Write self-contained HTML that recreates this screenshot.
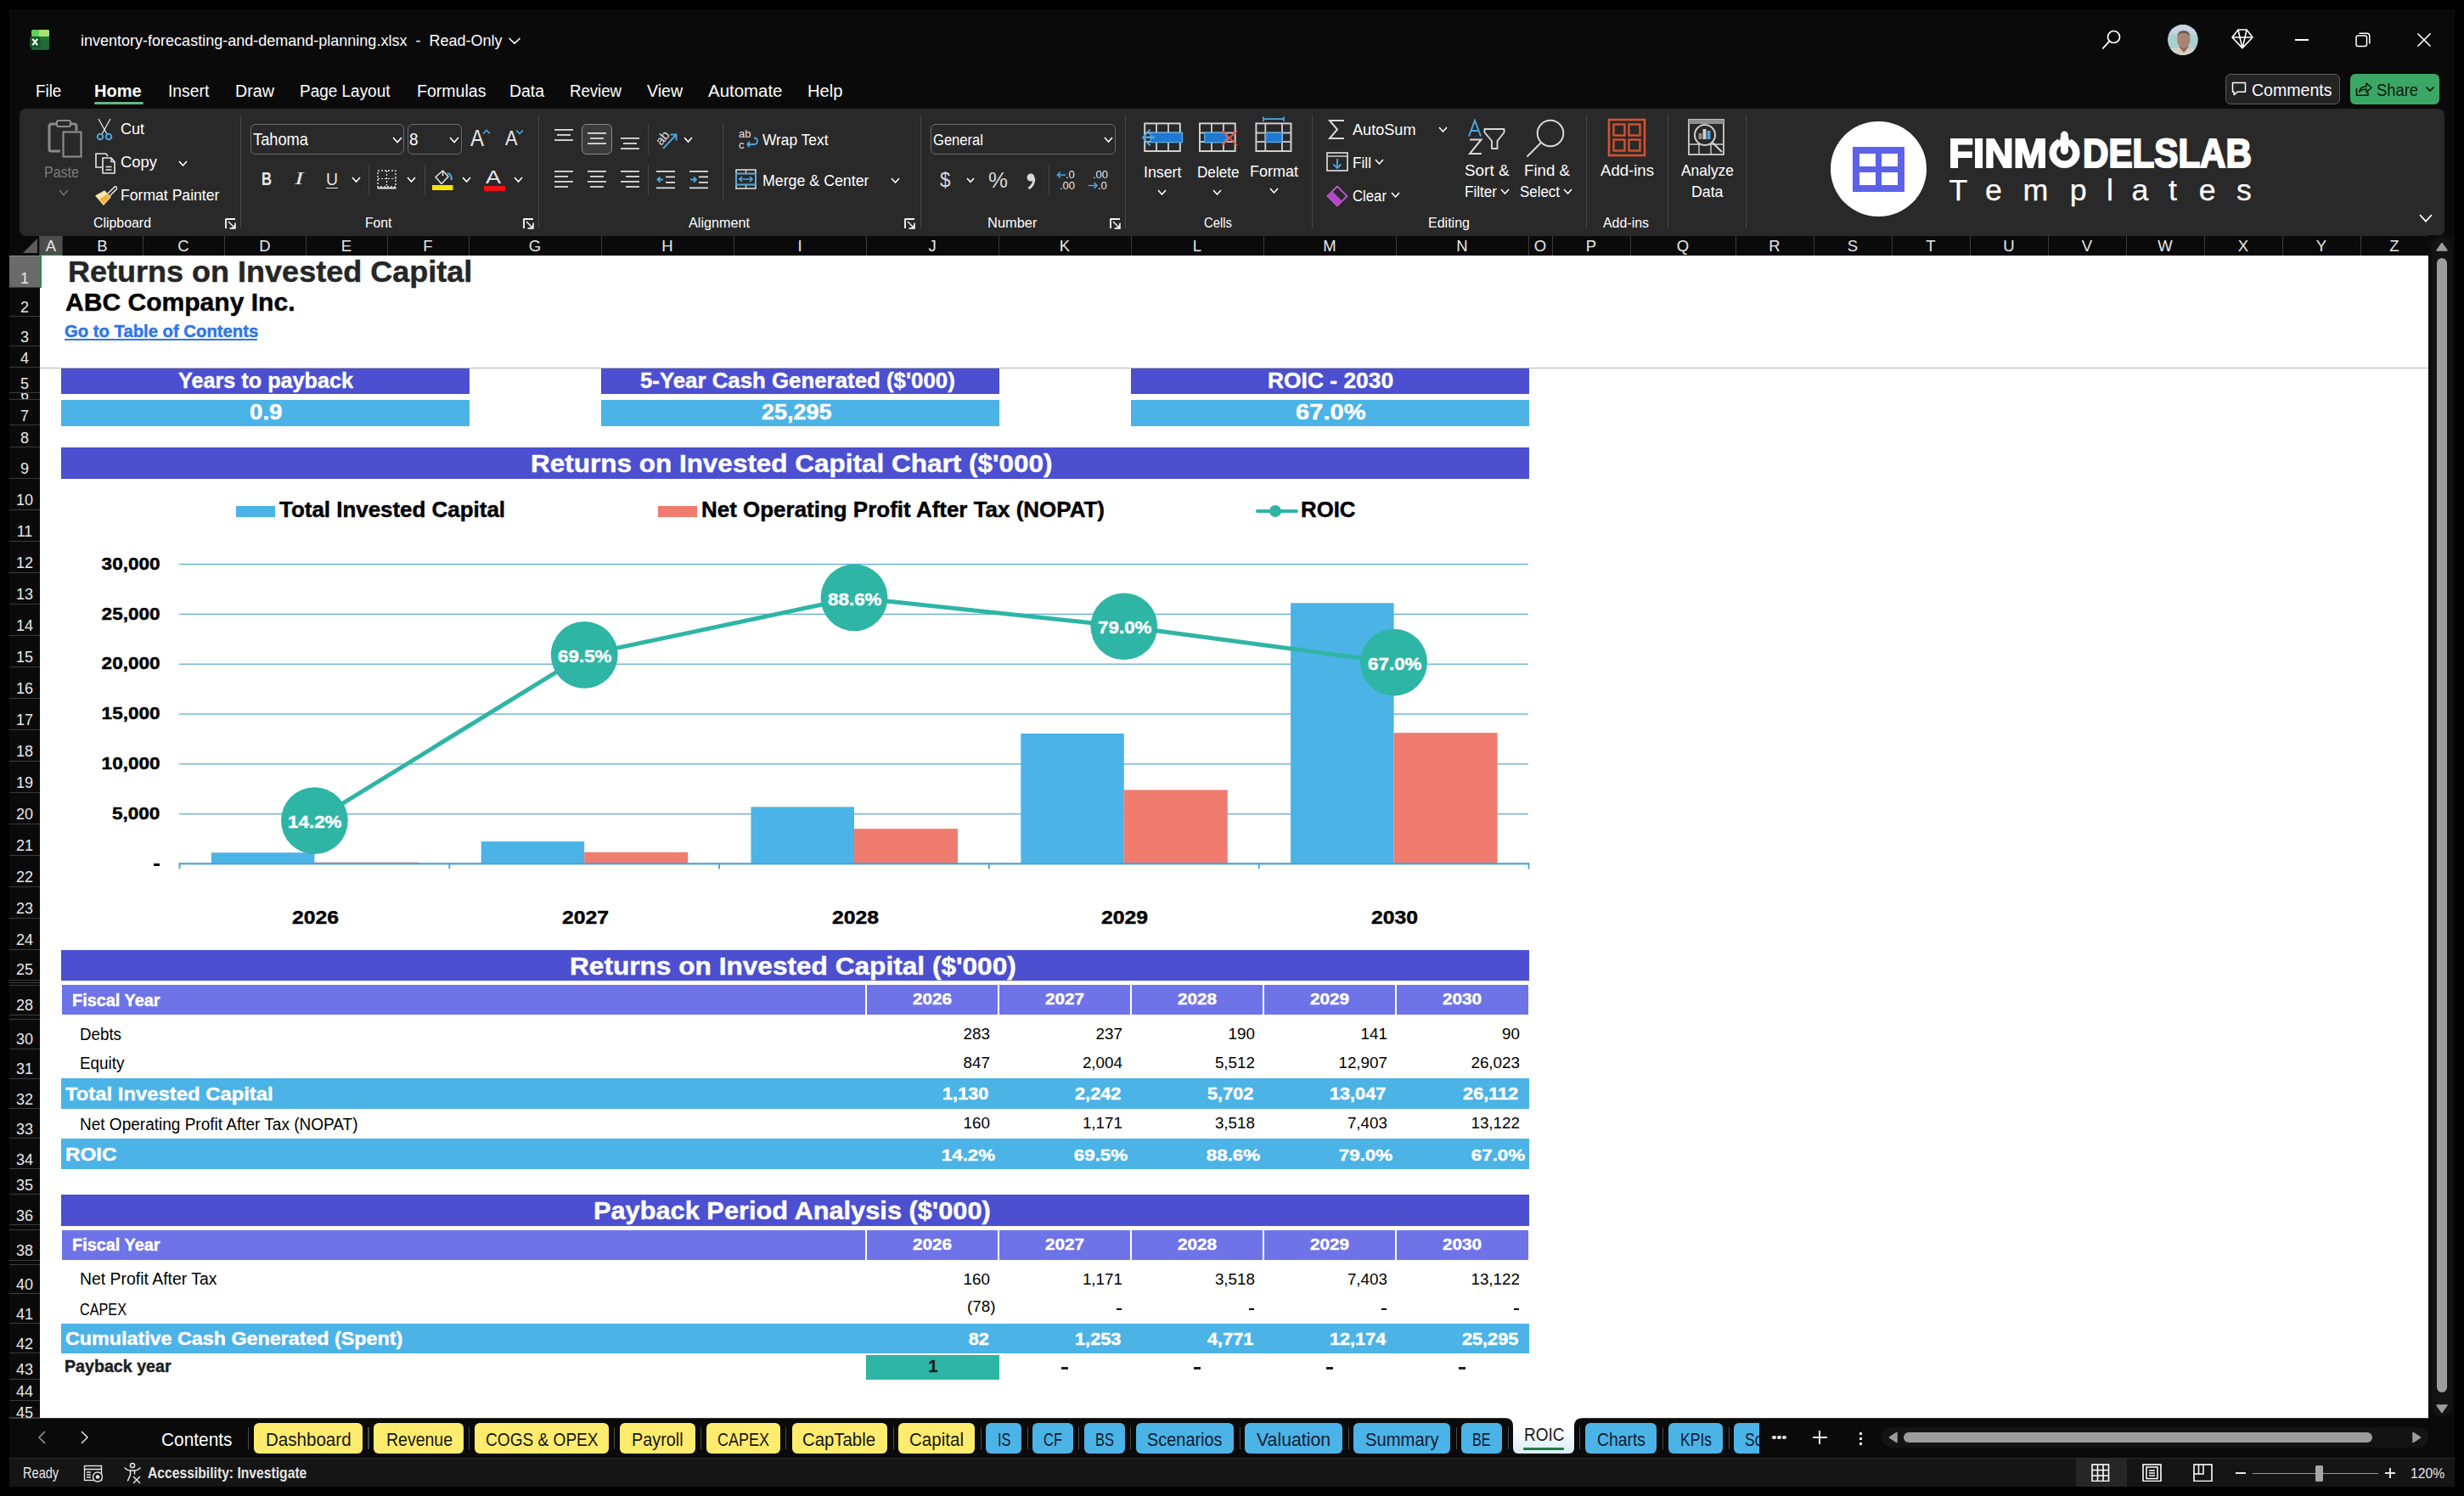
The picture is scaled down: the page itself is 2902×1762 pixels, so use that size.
<!DOCTYPE html>
<html><head><meta charset="utf-8"><style>
html,body{margin:0;padding:0;}
body{width:2902px;height:1762px;background:#000;position:relative;overflow:hidden;font-family:'Liberation Sans',sans-serif;}
body>div{position:absolute;}

</style></head><body>
<div style="left:11px;top:11px;width:2880px;height:1740px;background:#0a0a0a;"></div>
<svg style="position:absolute;left:35px;top:35px;" width="24" height="24" viewBox="0 0 24 24">
<rect x="2" y="0" width="21" height="23.5" rx="2" fill="#21773a"/>
<rect x="2" y="0" width="21" height="8" rx="2" fill="#5fcf5b"/>
<rect x="11" y="0" width="12" height="8" rx="1.5" fill="#a8e46f"/>
<rect x="2" y="12" width="21" height="11.5" rx="1.5" fill="#1e6b36"/>
<rect x="0" y="8" width="12.5" height="13" rx="2" fill="#16582b"/>
<path d="M3.3 10.8 L9.2 18.2 M9.2 10.8 L3.3 18.2" stroke="#fff" stroke-width="2.1"/>
</svg>
<div style="left:95.00px;top:38.22px;font-family:'Liberation Sans', sans-serif;font-size:19.28px;line-height:1;font-weight:400;color:#ffffff;white-space:pre;transform:scaleX(0.9348);transform-origin:0 0;">inventory-forecasting-and-demand-planning.xlsx  -  Read-Only</div>
<svg style="position:absolute;left:597px;top:42px;" width="18" height="12" viewBox="0 0 18 12"><path d="M2.5 3 L9 9.2 L15.5 3" fill="none" stroke="#fff" stroke-width="1.6"/></svg>
<div style="left:42.20px;top:97.57px;font-family:'Liberation Sans', sans-serif;font-size:19.57px;line-height:1;font-weight:400;color:#ffffff;white-space:pre;transform:scaleX(0.9619);transform-origin:0 0;">File</div>
<div style="left:111.00px;top:97.57px;font-family:'Liberation Sans', sans-serif;font-size:19.57px;line-height:1;font-weight:700;color:#ffffff;white-space:pre;transform:scaleX(1.0237);transform-origin:0 0;">Home</div>
<div style="left:197.80px;top:97.57px;font-family:'Liberation Sans', sans-serif;font-size:19.57px;line-height:1;font-weight:400;color:#ffffff;white-space:pre;transform:scaleX(0.9859);transform-origin:0 0;">Insert</div>
<div style="left:277.00px;top:97.57px;font-family:'Liberation Sans', sans-serif;font-size:19.57px;line-height:1;font-weight:400;color:#ffffff;white-space:pre;transform:scaleX(1.0082);transform-origin:0 0;">Draw</div>
<div style="left:352.60px;top:97.57px;font-family:'Liberation Sans', sans-serif;font-size:19.57px;line-height:1;font-weight:400;color:#ffffff;white-space:pre;transform:scaleX(0.9692);transform-origin:0 0;">Page Layout</div>
<div style="left:490.60px;top:97.57px;font-family:'Liberation Sans', sans-serif;font-size:19.57px;line-height:1;font-weight:400;color:#ffffff;white-space:pre;transform:scaleX(0.9992);transform-origin:0 0;">Formulas</div>
<div style="left:599.50px;top:97.57px;font-family:'Liberation Sans', sans-serif;font-size:19.57px;line-height:1;font-weight:400;color:#ffffff;white-space:pre;transform:scaleX(0.9928);transform-origin:0 0;">Data</div>
<div style="left:670.50px;top:97.57px;font-family:'Liberation Sans', sans-serif;font-size:19.57px;line-height:1;font-weight:400;color:#ffffff;white-space:pre;transform:scaleX(0.9517);transform-origin:0 0;">Review</div>
<div style="left:761.50px;top:97.57px;font-family:'Liberation Sans', sans-serif;font-size:19.57px;line-height:1;font-weight:400;color:#ffffff;white-space:pre;transform:scaleX(0.9996);transform-origin:0 0;">View</div>
<div style="left:833.60px;top:97.57px;font-family:'Liberation Sans', sans-serif;font-size:19.57px;line-height:1;font-weight:400;color:#ffffff;white-space:pre;transform:scaleX(1.0446);transform-origin:0 0;">Automate</div>
<div style="left:950.60px;top:97.57px;font-family:'Liberation Sans', sans-serif;font-size:19.57px;line-height:1;font-weight:400;color:#ffffff;white-space:pre;transform:scaleX(1.0298);transform-origin:0 0;">Help</div>
<div style="left:111px;top:120px;width:58px;height:3px;background:#62b882;border-radius:1.5px;"></div>
<svg style="position:absolute;left:2474px;top:34px;" width="26" height="26" viewBox="0 0 26 26"><circle cx="15.5" cy="9.5" r="7" fill="none" stroke="#fff" stroke-width="1.7"/><path d="M10.4 14.6 L2.8 22.8" stroke="#fff" stroke-width="1.9" stroke-linecap="round"/></svg>
<svg style="position:absolute;left:2553px;top:28.8px" width="36" height="36" viewBox="0 0 36 36">
<defs><clipPath id="av"><circle cx="17.9" cy="18" r="17.9"/></clipPath></defs>
<g clip-path="url(#av)"><rect width="36" height="36" fill="#aacfcf"/><rect width="36" height="11.5" fill="#c9d3e4"/>
<rect y="28" width="36" height="8" fill="#c9d9d6"/>
<path d="M3 36 Q6 28.5 13.5 26.5 L19 33 L24.5 26.5 Q31 28.5 34 36 Z" fill="#d8cfc2"/>
<path d="M13.5 26.5 L19 33 L24.5 26.5 L23 23 L15 23 Z" fill="#8e6b5c"/>
<ellipse cx="18.8" cy="17.5" rx="7.8" ry="10" fill="#a98474"/>
<path d="M11 14 Q12 7 18.8 7 Q26 7 26.6 14 Q24 10 18.8 10 Q13 10 11 14 Z" fill="#6f5b52"/>
</g></svg>
<svg style="position:absolute;left:2626px;top:32px;" width="30" height="28" viewBox="0 0 30 28"><path d="M10 3 L20 3 L27 12 L15 24.6 L3 12 Z M3 12 L27 12 M10 3 L12 12 L15 24.6 L18 12 L20 3" fill="none" stroke="#fff" stroke-width="1.6" stroke-linejoin="round"/></svg>
<div style="left:2703px;top:46px;width:16px;height:1.6px;background:#ffffff;"></div>
<svg style="position:absolute;left:2773px;top:37px;" width="20" height="20" viewBox="0 0 20 20"><rect x="2" y="5" width="12.5" height="12.5" rx="2.2" fill="none" stroke="#fff" stroke-width="1.5"/><path d="M5.5 2.2 L14.5 2.2 Q17.8 2.2 17.8 5.5 L17.8 14.5" fill="none" stroke="#fff" stroke-width="1.5"/></svg>
<svg style="position:absolute;left:2845px;top:37px;" width="20" height="20" viewBox="0 0 20 20"><path d="M2.5 2.5 L17.5 17.5 M17.5 2.5 L2.5 17.5" stroke="#fff" stroke-width="1.6"/></svg>
<div style="left:2621px;top:87px;width:132.6px;height:33.6px;border:1.2px solid #5c5c5c;border-radius:6px;background:#242424;"></div>
<svg style="position:absolute;left:2627px;top:95px;" width="20" height="20" viewBox="0 0 20 20"><path d="M2.5 2.5 L17.5 2.5 L17.5 13.2 L8 13.2 L4.2 16.8 L4.2 13.2 L2.5 13.2 Z" fill="none" stroke="#fff" stroke-width="1.5" stroke-linejoin="round"/></svg>
<div style="left:2652.00px;top:95.90px;font-family:'Liberation Sans', sans-serif;font-size:20.00px;line-height:1;font-weight:400;color:#fff;white-space:pre;transform:scaleX(0.9772);transform-origin:0 0;">Comments</div>
<div style="left:2767.7px;top:87px;width:105.3px;height:36px;background:#3ba764;border-radius:6px;"></div>
<svg style="position:absolute;left:2773px;top:95px;" width="22" height="20" viewBox="0 0 22 20"><path d="M2.5 9 L2.5 17.2 L15.8 17.2 L15.8 13.5" fill="none" stroke="#0b1a10" stroke-width="1.6"/><path d="M5.5 13.5 Q6.5 7 14 7 L14 3 L20 8.3 L14 13.5 L14 10 Q9 10 5.5 13.5 Z" fill="none" stroke="#0b1a10" stroke-width="1.5" stroke-linejoin="round"/></svg>
<div style="left:2799.20px;top:95.90px;font-family:'Liberation Sans', sans-serif;font-size:20.00px;line-height:1;font-weight:400;color:#0b1a10;white-space:pre;transform:scaleX(0.9180);transform-origin:0 0;">Share</div>
<svg style="position:absolute;left:2855px;top:100px;" width="14" height="10" viewBox="0 0 14 10"><path d="M2.5 2.5 L7 7 L11.5 2.5" fill="none" stroke="#0b1a10" stroke-width="1.6"/></svg>
<div style="left:23px;top:128px;width:2856px;height:150px;background:#292929;border-radius:8px;"></div>
<div style="left:283px;top:135px;width:1px;height:134px;background:#474747;"></div>
<div style="left:634px;top:135px;width:1px;height:134px;background:#474747;"></div>
<div style="left:1083.5px;top:135px;width:1px;height:134px;background:#474747;"></div>
<div style="left:1325px;top:135px;width:1px;height:134px;background:#474747;"></div>
<div style="left:1544.6px;top:135px;width:1px;height:134px;background:#474747;"></div>
<div style="left:1868px;top:135px;width:1px;height:134px;background:#474747;"></div>
<div style="left:1963.7px;top:135px;width:1px;height:134px;background:#474747;"></div>
<div style="left:2056px;top:135px;width:1px;height:134px;background:#474747;"></div>
<svg style="position:absolute;left:53px;top:140px;" width="46" height="48" viewBox="0 0 46 48">
<path d="M13 6 L8 6 Q5 6 5 9 L5 36 Q5 38 7 38 L18 38" fill="none" stroke="#8a8a8a" stroke-width="3"/>
<path d="M31 6 L35 6 Q37 6 37 9 L37 14" fill="none" stroke="#8a8a8a" stroke-width="3"/>
<rect x="14" y="2" width="16" height="7" rx="2" fill="none" stroke="#8a8a8a" stroke-width="2.2"/>
<rect x="21.5" y="15.5" width="21" height="29" fill="none" stroke="#8a8a8a" stroke-width="2.2"/>
</svg>
<div style="left:51.50px;top:194.72px;font-family:'Liberation Sans', sans-serif;font-size:17.97px;line-height:1;font-weight:400;color:#7b7b7b;white-space:pre;transform:scaleX(0.8922);transform-origin:0 0;">Paste</div>
<svg style="position:absolute;left:67.5px;top:222.25px;" width="14" height="9.5" viewBox="0 0 14 9.5"><path d="M2 2 L7.0 7.5 L12 2" fill="none" stroke="#6f6f6f" stroke-width="1.6"/></svg>
<svg style="position:absolute;left:110px;top:139px;" width="26" height="27" viewBox="0 0 26 27">
<path d="M6 1 L16 19 M20 1 L10 19" stroke="#e6e6e6" stroke-width="1.3"/>
<circle cx="8" cy="22" r="3.3" fill="none" stroke="#4ca6e0" stroke-width="2"/>
<circle cx="18" cy="22" r="3.3" fill="none" stroke="#4ca6e0" stroke-width="2"/>
</svg>
<div style="left:141.50px;top:144.05px;font-family:'Liberation Sans', sans-serif;font-size:17.83px;line-height:1;font-weight:400;color:#ffffff;white-space:pre;transform:scaleX(1.0096);transform-origin:0 0;">Cut</div>
<svg style="position:absolute;left:110px;top:178px;" width="28" height="28" viewBox="0 0 28 28">
<path d="M15 3 L3 3 L3 19 L10 19" fill="none" stroke="#e6e6e6" stroke-width="1.6"/>
<path d="M15 3 L17 6" stroke="#e6e6e6" stroke-width="1.6"/>
<path d="M11 8 L21 8 L25 12.5 L25 26 L11 26 Z" fill="none" stroke="#e6e6e6" stroke-width="1.6" stroke-linejoin="round"/>
<path d="M21 8 L21 12.5 L25 12.5 M14.5 18.5 L21.5 18.5 M14.5 22 L21.5 22" fill="none" stroke="#e6e6e6" stroke-width="1.4"/>
</svg>
<div style="left:141.50px;top:183.05px;font-family:'Liberation Sans', sans-serif;font-size:17.83px;line-height:1;font-weight:400;color:#ffffff;white-space:pre;transform:scaleX(1.0338);transform-origin:0 0;">Copy</div>
<svg style="position:absolute;left:209.0px;top:187.525px;" width="13" height="8.95" viewBox="0 0 13 8.95"><path d="M2 2 L6.5 6.95 L11 2" fill="none" stroke="#fff" stroke-width="1.6"/></svg>
<svg style="position:absolute;left:110px;top:216px;" width="28" height="26" viewBox="0 0 28 26">
<path d="M17 12 L24.5 4.5 Q26 3 27.3 4.3 Q28.3 5.5 27 7 L19.5 14.5" fill="none" stroke="#e6e6e6" stroke-width="1.6"/>
<path d="M3 14.5 L13 9 L20 16 L12 25 Z" fill="#f2b233" stroke="#f5d08a" stroke-width="1.4" stroke-linejoin="round"/>
<path d="M3 14.5 L13 9 L16.5 12.5 L6.5 19 Z" fill="#f7e3b5"/>
</svg>
<div style="left:141.50px;top:221.43px;font-family:'Liberation Sans', sans-serif;font-size:18.55px;line-height:1;font-weight:400;color:#ffffff;white-space:pre;transform:scaleX(0.9498);transform-origin:0 0;">Format Painter</div>
<div style="left:109.50px;top:253.76px;font-family:'Liberation Sans', sans-serif;font-size:17.10px;line-height:1;font-weight:400;color:#ffffff;white-space:pre;transform:scaleX(0.9293);transform-origin:0 0;">Clipboard</div>
<svg style="position:absolute;left:265px;top:257px;" width="13" height="13" viewBox="0 0 13 13"><path d="M1 12 L1 1 L12 1" fill="none" stroke="#fff" stroke-width="1.3" transform="translate(0,0)"/><path d="M1 1 L12 1 M1 1 L1 12 M12 5.5 L12 12 L5.5 12 M4 4 L11.5 11.5 M11.5 7.5 L11.5 11.5 L7.5 11.5" fill="none" stroke="#fff" stroke-width="1.4"/></svg>
<div style="left:295px;top:146px;width:179px;height:34px;border:1px solid #6b6b6b;border-radius:6px;background:transparent;"></div>
<div style="left:297.50px;top:154.79px;font-family:'Liberation Sans', sans-serif;font-size:19.42px;line-height:1;font-weight:400;color:#ffffff;white-space:pre;transform:scaleX(0.9414);transform-origin:0 0;">Tahoma</div>
<svg style="position:absolute;left:460.5px;top:159.75px;" width="14" height="9.5" viewBox="0 0 14 9.5"><path d="M2 2 L7.0 7.5 L12 2" fill="none" stroke="#fff" stroke-width="1.6"/></svg>
<div style="left:479.5px;top:146px;width:62.5px;height:34px;border:1px solid #6b6b6b;border-radius:6px;background:transparent;"></div>
<div style="left:481.50px;top:154.79px;font-family:'Liberation Sans', sans-serif;font-size:19.42px;line-height:1;font-weight:400;color:#ffffff;white-space:pre;transform:scaleX(0.9725);transform-origin:0 0;">8</div>
<svg style="position:absolute;left:528.0px;top:159.75px;" width="14" height="9.5" viewBox="0 0 14 9.5"><path d="M2 2 L7.0 7.5 L12 2" fill="none" stroke="#fff" stroke-width="1.6"/></svg>
<div style="left:553.50px;top:148.59px;font-family:'Liberation Sans', sans-serif;font-size:27.54px;line-height:1;font-weight:400;color:#e8e8e8;white-space:pre;transform:scaleX(0.8715);transform-origin:0 0;">A</div>
<svg style="position:absolute;left:567px;top:151px;" width="12" height="9" viewBox="0 0 12 9"><path d="M2 6.5 L6 2.5 L10 6.5" fill="none" stroke="#4ca6e0" stroke-width="1.7"/></svg>
<div style="left:594.50px;top:152.29px;font-family:'Liberation Sans', sans-serif;font-size:23.19px;line-height:1;font-weight:400;color:#e8e8e8;white-space:pre;transform:scaleX(0.9374);transform-origin:0 0;">A</div>
<svg style="position:absolute;left:606px;top:151px;" width="12" height="9" viewBox="0 0 12 9"><path d="M2 2.5 L6 6.5 L10 2.5" fill="none" stroke="#4ca6e0" stroke-width="1.7"/></svg>
<div style="left:307.50px;top:200.02px;font-family:'Liberation Sans', sans-serif;font-size:21.74px;line-height:1;font-weight:700;color:#e6e6e6;white-space:pre;transform:scaleX(0.7649);transform-origin:0 0;">B</div>
<div style="left:346.50px;top:200.02px;font-family:'Liberation Serif', serif;font-size:21.74px;line-height:1;font-weight:400;color:#e6e6e6;white-space:pre;font-style:italic;transform:scaleX(1.4514);transform-origin:0 0;">I</div>
<div style="left:383.50px;top:200.75px;font-family:'Liberation Sans', sans-serif;font-size:20.29px;line-height:1;font-weight:400;color:#e6e6e6;white-space:pre;transform:scaleX(0.9562);transform-origin:0 0;">U</div>
<div style="left:383.5px;top:220.5px;width:14px;height:1.6px;background:#e6e6e6;"></div>
<svg style="position:absolute;left:413.0px;top:207.025px;" width="13" height="8.95" viewBox="0 0 13 8.95"><path d="M2 2 L6.5 6.95 L11 2" fill="none" stroke="#fff" stroke-width="1.6"/></svg>
<div style="left:434px;top:194px;width:1px;height:36px;background:#474747;"></div>
<svg style="position:absolute;left:443px;top:199px;" width="26" height="26" viewBox="0 0 26 26">
<rect x="2" y="2" width="21" height="19" fill="none" stroke="#e6e6e6" stroke-width="1.4" stroke-dasharray="2 2"/>
<path d="M12.5 2 L12.5 21 M2 11.5 L23 11.5" stroke="#e6e6e6" stroke-width="1.2" stroke-dasharray="2 2"/>
<rect x="1.5" y="21.5" width="22" height="2" fill="#e6e6e6"/>
</svg>
<svg style="position:absolute;left:477.5px;top:207.025px;" width="13" height="8.95" viewBox="0 0 13 8.95"><path d="M2 2 L6.5 6.95 L11 2" fill="none" stroke="#fff" stroke-width="1.6"/></svg>
<div style="left:500px;top:194px;width:1px;height:36px;background:#474747;"></div>
<svg style="position:absolute;left:508px;top:199px;" width="28" height="26" viewBox="0 0 28 26">
<path d="M5 9.5 L13.5 2 L20 9 L12 17.5 Z" fill="none" stroke="#e6e6e6" stroke-width="1.5" stroke-linejoin="round"/>
<path d="M13.5 2 L13.5 8" stroke="#e6e6e6" stroke-width="1.5"/>
<path d="M19 5 Q24.5 6 23.5 13" fill="none" stroke="#4ca6e0" stroke-width="2.2"/>
<rect x="1" y="19" width="24.5" height="6" fill="#f5e500"/>
</svg>
<svg style="position:absolute;left:542.5px;top:207.025px;" width="13" height="8.95" viewBox="0 0 13 8.95"><path d="M2 2 L6.5 6.95 L11 2" fill="none" stroke="#fff" stroke-width="1.6"/></svg>
<div style="left:572.00px;top:197.91px;font-family:'Liberation Sans', sans-serif;font-size:22.46px;line-height:1;font-weight:400;color:#e6e6e6;white-space:pre;transform:scaleX(1.2013);transform-origin:0 0;">A</div>
<div style="left:570px;top:218.5px;width:24.5px;height:6px;background:#ee1111;"></div>
<svg style="position:absolute;left:604.0px;top:207.025px;" width="13" height="8.95" viewBox="0 0 13 8.95"><path d="M2 2 L6.5 6.95 L11 2" fill="none" stroke="#fff" stroke-width="1.6"/></svg>
<div style="left:430.00px;top:253.76px;font-family:'Liberation Sans', sans-serif;font-size:17.10px;line-height:1;font-weight:400;color:#ffffff;white-space:pre;transform:scaleX(0.9205);transform-origin:0 0;">Font</div>
<svg style="position:absolute;left:616px;top:257px;" width="13" height="13" viewBox="0 0 13 13"><path d="M1 12 L1 1 L12 1" fill="none" stroke="#fff" stroke-width="1.3" transform="translate(0,0)"/><path d="M1 1 L12 1 M1 1 L1 12 M12 5.5 L12 12 L5.5 12 M4 4 L11.5 11.5 M11.5 7.5 L11.5 11.5 L7.5 11.5" fill="none" stroke="#fff" stroke-width="1.4"/></svg>
<svg style="position:absolute;left:653px;top:152px;" width="22" height="20.299999999999997" viewBox="0 0 22 20.299999999999997"><rect x="0.0" y="0.0" width="22" height="1.7" fill="#e6e6e6"/><rect x="3.0" y="6.1" width="16" height="1.7" fill="#e6e6e6"/><rect x="0.0" y="12.2" width="22" height="1.7" fill="#e6e6e6"/></svg>
<div style="left:685px;top:146px;width:34px;height:34px;border:1px solid #8a8a8a;border-radius:6px;background:#3b3b3b;"></div>
<svg style="position:absolute;left:692px;top:156px;" width="22" height="20.299999999999997" viewBox="0 0 22 20.299999999999997"><rect x="0.0" y="0.0" width="22" height="1.7" fill="#e6e6e6"/><rect x="3.0" y="6.1" width="16" height="1.7" fill="#e6e6e6"/><rect x="0.0" y="12.2" width="22" height="1.7" fill="#e6e6e6"/></svg>
<svg style="position:absolute;left:731px;top:162px;" width="22" height="20.299999999999997" viewBox="0 0 22 20.299999999999997"><rect x="0.0" y="0.0" width="22" height="1.7" fill="#e6e6e6"/><rect x="3.0" y="6.1" width="16" height="1.7" fill="#e6e6e6"/><rect x="0.0" y="12.2" width="22" height="1.7" fill="#e6e6e6"/></svg>
<div style="left:763px;top:146px;width:1px;height:36px;background:#474747;"></div>
<svg style="position:absolute;left:770px;top:148px;" width="30" height="30" viewBox="0 0 30 30">
<text x="1.5" y="19.5" font-family="Liberation Sans" font-size="15" fill="#e0e0e0" transform="rotate(-50 10 14)">ab</text>
<path d="M11 27 L26.5 10.5 M19.5 10.5 L26.5 10.5 L26.5 17.5" fill="none" stroke="#4ca6e0" stroke-width="1.9"/>
</svg>
<svg style="position:absolute;left:804.0px;top:160.025px;" width="13" height="8.95" viewBox="0 0 13 8.95"><path d="M2 2 L6.5 6.95 L11 2" fill="none" stroke="#fff" stroke-width="1.6"/></svg>
<svg style="position:absolute;left:653px;top:201.2px;" width="22" height="26.2" viewBox="0 0 22 26.2"><rect x="0" y="0.0" width="22" height="1.7" fill="#e6e6e6"/><rect x="0" y="6.05" width="16" height="1.7" fill="#e6e6e6"/><rect x="0" y="12.1" width="22" height="1.7" fill="#e6e6e6"/><rect x="0" y="18.15" width="16" height="1.7" fill="#e6e6e6"/></svg>
<svg style="position:absolute;left:692px;top:201.2px;" width="22" height="26.2" viewBox="0 0 22 26.2"><rect x="0.0" y="0.0" width="22" height="1.7" fill="#e6e6e6"/><rect x="3.0" y="6.05" width="16" height="1.7" fill="#e6e6e6"/><rect x="0.0" y="12.1" width="22" height="1.7" fill="#e6e6e6"/><rect x="3.0" y="18.15" width="16" height="1.7" fill="#e6e6e6"/></svg>
<svg style="position:absolute;left:731px;top:201.2px;" width="22" height="26.2" viewBox="0 0 22 26.2"><rect x="0" y="0.0" width="22" height="1.7" fill="#e6e6e6"/><rect x="6" y="6.05" width="16" height="1.7" fill="#e6e6e6"/><rect x="0" y="12.1" width="22" height="1.7" fill="#e6e6e6"/><rect x="6" y="18.15" width="16" height="1.7" fill="#e6e6e6"/></svg>
<div style="left:763px;top:194px;width:1px;height:36px;background:#474747;"></div>
<svg style="position:absolute;left:773px;top:200px;" width="24" height="24" viewBox="0 0 24 24"><rect x="0" y="1" width="22" height="1.7" fill="#e6e6e6"/><rect x="11" y="7.5" width="11" height="1.7" fill="#e6e6e6"/><rect x="11" y="14" width="11" height="1.7" fill="#e6e6e6"/><rect x="0" y="20.5" width="22" height="1.7" fill="#e6e6e6"/><path d="M8 11.5 L1.5 11.5 M4.5 8.5 L1.5 11.5 L4.5 14.5" fill="none" stroke="#4ca6e0" stroke-width="1.8"/></svg>
<svg style="position:absolute;left:812px;top:200px;" width="24" height="24" viewBox="0 0 24 24"><rect x="0" y="1" width="22" height="1.7" fill="#e6e6e6"/><rect x="11" y="7.5" width="11" height="1.7" fill="#e6e6e6"/><rect x="11" y="14" width="11" height="1.7" fill="#e6e6e6"/><rect x="0" y="20.5" width="22" height="1.7" fill="#e6e6e6"/><path d="M1 11.5 L8 11.5 M5 8.5 L8 11.5 L5 14.5" fill="none" stroke="#4ca6e0" stroke-width="1.8"/></svg>
<div style="left:851px;top:145px;width:1px;height:92px;background:#474747;"></div>
<svg style="position:absolute;left:867px;top:150px;" width="28" height="28" viewBox="0 0 28 28">
<text x="3" y="12" font-family="Liberation Sans" font-size="13" fill="#e6e6e6">ab</text>
<text x="3" y="25" font-family="Liberation Sans" font-size="13" fill="#e6e6e6">c</text>
<path d="M13 20 L21 20 Q25 20 25 16 Q25 12.5 21 12.5 M13 20 L16 17 M13 20 L16 23" fill="none" stroke="#4ca6e0" stroke-width="1.8"/>
</svg>
<div style="left:897.50px;top:155.68px;font-family:'Liberation Sans', sans-serif;font-size:18.26px;line-height:1;font-weight:400;color:#ffffff;white-space:pre;transform:scaleX(0.9511);transform-origin:0 0;">Wrap Text</div>
<svg style="position:absolute;left:865px;top:198px;" width="28" height="28" viewBox="0 0 28 28">
<rect x="2" y="2" width="23" height="22" fill="none" stroke="#e6e6e6" stroke-width="1.5"/>
<path d="M2 6.5 L25 6.5 M2 19.5 L25 19.5 M13.5 2 L13.5 6.5 M13.5 19.5 L13.5 24" stroke="#e6e6e6" stroke-width="1.3"/>
<rect x="2" y="6.5" width="23" height="13" fill="none" stroke="#4ca6e0" stroke-width="1.6"/>
<path d="M6 13 L21 13 M9 10 L6 13 L9 16 M18 10 L21 13 L18 16" fill="none" stroke="#4ca6e0" stroke-width="1.7"/>
</svg>
<div style="left:897.50px;top:203.78px;font-family:'Liberation Sans', sans-serif;font-size:18.26px;line-height:1;font-weight:400;color:#ffffff;white-space:pre;transform:scaleX(0.9742);transform-origin:0 0;">Merge &amp; Center</div>
<svg style="position:absolute;left:1048.0px;top:207.525px;" width="13" height="8.95" viewBox="0 0 13 8.95"><path d="M2 2 L6.5 6.95 L11 2" fill="none" stroke="#fff" stroke-width="1.6"/></svg>
<div style="left:810.50px;top:253.76px;font-family:'Liberation Sans', sans-serif;font-size:17.10px;line-height:1;font-weight:400;color:#ffffff;white-space:pre;transform:scaleX(0.9472);transform-origin:0 0;">Alignment</div>
<svg style="position:absolute;left:1065px;top:257px;" width="13" height="13" viewBox="0 0 13 13"><path d="M1 12 L1 1 L12 1" fill="none" stroke="#fff" stroke-width="1.3" transform="translate(0,0)"/><path d="M1 1 L12 1 M1 1 L1 12 M12 5.5 L12 12 L5.5 12 M4 4 L11.5 11.5 M11.5 7.5 L11.5 11.5 L7.5 11.5" fill="none" stroke="#fff" stroke-width="1.4"/></svg>
<div style="left:1096px;top:146px;width:215.5px;height:34px;border:1px solid #6b6b6b;border-radius:6px;background:transparent;"></div>
<div style="left:1099.00px;top:154.94px;font-family:'Liberation Sans', sans-serif;font-size:19.13px;line-height:1;font-weight:400;color:#ffffff;white-space:pre;transform:scaleX(0.8670);transform-origin:0 0;">General</div>
<svg style="position:absolute;left:1298.5px;top:160.025px;" width="13" height="8.95" viewBox="0 0 13 8.95"><path d="M2 2 L6.5 6.95 L11 2" fill="none" stroke="#fff" stroke-width="1.6"/></svg>
<div style="left:1107.00px;top:199.56px;font-family:'Liberation Sans', sans-serif;font-size:24.64px;line-height:1;font-weight:400;color:#d8d8d8;white-space:pre;transform:scaleX(0.9122);transform-origin:0 0;">$</div>
<svg style="position:absolute;left:1136.5px;top:207.8px;" width="12" height="8.4" viewBox="0 0 12 8.4"><path d="M2 2 L6.0 6.4 L10 2" fill="none" stroke="#fff" stroke-width="1.6"/></svg>
<div style="left:1163.50px;top:199.94px;font-family:'Liberation Sans', sans-serif;font-size:25.36px;line-height:1;font-weight:400;color:#d8d8d8;white-space:pre;transform:scaleX(1.0194);transform-origin:0 0;">%</div>
<svg style="position:absolute;left:1205px;top:200px;" width="18" height="26" viewBox="0 0 18 26"><circle cx="9" cy="9" r="4.5" fill="#d8d8d8"/><path d="M12.8 10 Q13 18 6.5 22" fill="none" stroke="#d8d8d8" stroke-width="3"/></svg>
<div style="left:1235px;top:194px;width:1px;height:36px;background:#474747;"></div>
<svg style="position:absolute;left:1243px;top:198px;" width="30" height="28" viewBox="0 0 30 28">
<text x="12" y="12" font-family="Liberation Sans" font-size="13" fill="#e6e6e6">.0</text>
<text x="5" y="25" font-family="Liberation Sans" font-size="13" fill="#e6e6e6">.00</text>
<path d="M12 8 L2.5 8 M6 4.5 L2.5 8 L6 11.5" fill="none" stroke="#4ca6e0" stroke-width="1.7"/>
</svg>
<svg style="position:absolute;left:1281px;top:198px;" width="30" height="28" viewBox="0 0 30 28">
<text x="6" y="12" font-family="Liberation Sans" font-size="13" fill="#e6e6e6">.00</text>
<text x="12" y="25" font-family="Liberation Sans" font-size="13" fill="#e6e6e6">.0</text>
<path d="M1 20.5 L11 20.5 M7.5 17 L11 20.5 L7.5 24" fill="none" stroke="#4ca6e0" stroke-width="1.7"/>
</svg>
<div style="left:1162.50px;top:253.76px;font-family:'Liberation Sans', sans-serif;font-size:17.10px;line-height:1;font-weight:400;color:#ffffff;white-space:pre;transform:scaleX(0.9622);transform-origin:0 0;">Number</div>
<svg style="position:absolute;left:1307px;top:257px;" width="13" height="13" viewBox="0 0 13 13"><path d="M1 12 L1 1 L12 1" fill="none" stroke="#fff" stroke-width="1.3" transform="translate(0,0)"/><path d="M1 1 L12 1 M1 1 L1 12 M12 5.5 L12 12 L5.5 12 M4 4 L11.5 11.5 M11.5 7.5 L11.5 11.5 L7.5 11.5" fill="none" stroke="#fff" stroke-width="1.4"/></svg>
<svg style="position:absolute;left:0;top:0" width="2902" height="300"><rect x="1348.2" y="145.4" width="41.59999999999991" height="32.599999999999994" fill="none" stroke="#d0d0d0" stroke-width="2"/><rect x="1361.1" y="145.4" width="1.8" height="32.599999999999994" fill="#d0d0d0"/><rect x="1375.1" y="145.4" width="1.8" height="32.599999999999994" fill="#d0d0d0"/><rect x="1348.2" y="155.6" width="41.59999999999991" height="1.8" fill="#d0d0d0"/><rect x="1348.2" y="166.1" width="41.59999999999991" height="1.8" fill="#d0d0d0"/><rect x="1355" y="156.3" width="37.5" height="11.3" fill="#1f78d1" stroke="#56a9e3" stroke-width="1.4"/><path d="M1360 162 L1347 162 M1354.5 152.5 L1346 162 L1354.5 171.5" fill="none" stroke="#4ca6e0" stroke-width="2"/><path d="M1348 161 L1360 161" stroke="#56a9e3" stroke-width="1"/><rect x="1413" y="145.4" width="41.700000000000045" height="32.599999999999994" fill="none" stroke="#d0d0d0" stroke-width="2"/><rect x="1426.1" y="145.4" width="1.8" height="32.599999999999994" fill="#d0d0d0"/><rect x="1440.1" y="145.4" width="1.8" height="32.599999999999994" fill="#d0d0d0"/><rect x="1413" y="155.6" width="41.700000000000045" height="1.8" fill="#d0d0d0"/><rect x="1413" y="166.1" width="41.700000000000045" height="1.8" fill="#d0d0d0"/><path d="M1418.8 156.3 L1441 156.3 L1446.5 162 L1441 167.7 L1418.8 167.7 Z" fill="#1f78d1" stroke="#56a9e3" stroke-width="1.4"/><path d="M1439.5 154 L1457 171 M1457 154 L1439.5 171" stroke="#e2524a" stroke-width="2"/><rect x="1479.4" y="145.4" width="41.09999999999991" height="32.599999999999994" fill="none" stroke="#d0d0d0" stroke-width="2"/><rect x="1489.3999999999999" y="145.4" width="1.8" height="32.599999999999994" fill="#d0d0d0"/><rect x="1509.1" y="145.4" width="1.8" height="32.599999999999994" fill="#d0d0d0"/><rect x="1479.4" y="155.6" width="41.09999999999991" height="1.8" fill="#d0d0d0"/><rect x="1479.4" y="166.1" width="41.09999999999991" height="1.8" fill="#d0d0d0"/><rect x="1490.8" y="156.3" width="19" height="11.2" fill="#1f78d1" stroke="#56a9e3" stroke-width="1.4"/><path d="M1488 140.2 L1512 140.2 M1488 137.5 L1488 143 M1512 137.5 L1512 143" stroke="#4ca6e0" stroke-width="1.8"/></svg>
<div style="left:1346.50px;top:194.08px;font-family:'Liberation Sans', sans-serif;font-size:18.26px;line-height:1;font-weight:400;color:#ffffff;white-space:pre;transform:scaleX(0.9747);transform-origin:0 0;">Insert</div>
<svg style="position:absolute;left:1362.0px;top:221.525px;" width="13" height="8.95" viewBox="0 0 13 8.95"><path d="M2 2 L6.5 6.95 L11 2" fill="none" stroke="#fff" stroke-width="1.6"/></svg>
<div style="left:1409.50px;top:194.08px;font-family:'Liberation Sans', sans-serif;font-size:18.26px;line-height:1;font-weight:400;color:#ffffff;white-space:pre;transform:scaleX(0.9381);transform-origin:0 0;">Delete</div>
<svg style="position:absolute;left:1427.0px;top:221.525px;" width="13" height="8.95" viewBox="0 0 13 8.95"><path d="M2 2 L6.5 6.95 L11 2" fill="none" stroke="#fff" stroke-width="1.6"/></svg>
<div style="left:1472.00px;top:193.48px;font-family:'Liberation Sans', sans-serif;font-size:18.26px;line-height:1;font-weight:400;color:#ffffff;white-space:pre;transform:scaleX(0.9859);transform-origin:0 0;">Format</div>
<svg style="position:absolute;left:1493.5px;top:219.525px;" width="13" height="8.95" viewBox="0 0 13 8.95"><path d="M2 2 L6.5 6.95 L11 2" fill="none" stroke="#fff" stroke-width="1.6"/></svg>
<div style="left:1417.50px;top:253.76px;font-family:'Liberation Sans', sans-serif;font-size:17.10px;line-height:1;font-weight:400;color:#ffffff;white-space:pre;transform:scaleX(0.8684);transform-origin:0 0;">Cells</div>
<svg style="position:absolute;left:1563px;top:140px;" width="24" height="26" viewBox="0 0 24 26"><path d="M20 2 L3 2 L12 12.5 L3 23 L20 23" fill="none" stroke="#d8d8d8" stroke-width="2"/></svg>
<div style="left:1592.50px;top:143.68px;font-family:'Liberation Sans', sans-serif;font-size:18.26px;line-height:1;font-weight:400;color:#ffffff;white-space:pre;transform:scaleX(0.9923);transform-origin:0 0;">AutoSum</div>
<svg style="position:absolute;left:1693.0px;top:147.525px;" width="13" height="8.95" viewBox="0 0 13 8.95"><path d="M2 2 L6.5 6.95 L11 2" fill="none" stroke="#fff" stroke-width="1.6"/></svg>
<svg style="position:absolute;left:1561px;top:178px;" width="28" height="26" viewBox="0 0 28 26"><rect x="2" y="2" width="24" height="21" fill="none" stroke="#cfcfcf" stroke-width="1.8"/><path d="M2 6 L26 6" stroke="#cfcfcf" stroke-width="1.5"/><path d="M14 9 L14 20 M9.5 15.5 L14 20 L18.5 15.5" fill="none" stroke="#4ca6e0" stroke-width="1.9"/></svg>
<div style="left:1592.50px;top:182.68px;font-family:'Liberation Sans', sans-serif;font-size:18.26px;line-height:1;font-weight:400;color:#ffffff;white-space:pre;transform:scaleX(0.9437);transform-origin:0 0;">Fill</div>
<svg style="position:absolute;left:1618.0px;top:185.525px;" width="13" height="8.95" viewBox="0 0 13 8.95"><path d="M2 2 L6.5 6.95 L11 2" fill="none" stroke="#fff" stroke-width="1.6"/></svg>
<svg style="position:absolute;left:1561px;top:217px;" width="28" height="28" viewBox="0 0 28 28"><path d="M2.5 14 L14 2.5 L25.5 14 L14 25.5 Z" fill="none" stroke="#c05bd3" stroke-width="1.8"/><path d="M2.5 14 L8.2 8.3 L19.7 19.8 L14 25.5 Z" fill="#b148c9"/></svg>
<div style="left:1592.50px;top:221.68px;font-family:'Liberation Sans', sans-serif;font-size:18.26px;line-height:1;font-weight:400;color:#ffffff;white-space:pre;transform:scaleX(0.9169);transform-origin:0 0;">Clear</div>
<svg style="position:absolute;left:1637.0px;top:224.525px;" width="13" height="8.95" viewBox="0 0 13 8.95"><path d="M2 2 L6.5 6.95 L11 2" fill="none" stroke="#fff" stroke-width="1.6"/></svg>
<svg style="position:absolute;left:0;top:0" width="2902" height="300"><path d="M1730 160.5 L1737 142 L1744 160.5 M1732.6 154 L1741.4 154" fill="none" stroke="#4ca6e0" stroke-width="2"/><path d="M1731 164.5 L1744.5 164.5 L1731 181 L1745 181" fill="none" stroke="#d8d8d8" stroke-width="2"/><path d="M1748.5 152 L1771.5 152 L1771.5 156 L1763.5 166 L1763.5 175 L1757 175 L1757 166 L1748.5 156 Z" fill="none" stroke="#d8d8d8" stroke-width="1.9" stroke-linejoin="round"/><circle cx="1826" cy="157" r="15.3" fill="none" stroke="#d8d8d8" stroke-width="2"/><path d="M1815 168 L1798.5 184.5" stroke="#d8d8d8" stroke-width="2"/></svg>
<div style="left:1724.50px;top:192.28px;font-family:'Liberation Sans', sans-serif;font-size:18.26px;line-height:1;font-weight:400;color:#ffffff;white-space:pre;transform:scaleX(1.0351);transform-origin:0 0;">Sort &amp;</div>
<div style="left:1724.50px;top:216.68px;font-family:'Liberation Sans', sans-serif;font-size:18.26px;line-height:1;font-weight:400;color:#ffffff;white-space:pre;transform:scaleX(0.9368);transform-origin:0 0;">Filter</div>
<svg style="position:absolute;left:1766.0px;top:220.525px;" width="13" height="8.95" viewBox="0 0 13 8.95"><path d="M2 2 L6.5 6.95 L11 2" fill="none" stroke="#fff" stroke-width="1.6"/></svg>
<div style="left:1794.50px;top:192.28px;font-family:'Liberation Sans', sans-serif;font-size:18.26px;line-height:1;font-weight:400;color:#ffffff;white-space:pre;transform:scaleX(1.0237);transform-origin:0 0;">Find &amp;</div>
<div style="left:1789.50px;top:216.68px;font-family:'Liberation Sans', sans-serif;font-size:18.26px;line-height:1;font-weight:400;color:#ffffff;white-space:pre;transform:scaleX(0.9264);transform-origin:0 0;">Select</div>
<svg style="position:absolute;left:1840.0px;top:220.525px;" width="13" height="8.95" viewBox="0 0 13 8.95"><path d="M2 2 L6.5 6.95 L11 2" fill="none" stroke="#fff" stroke-width="1.6"/></svg>
<div style="left:1681.50px;top:253.76px;font-family:'Liberation Sans', sans-serif;font-size:17.10px;line-height:1;font-weight:400;color:#ffffff;white-space:pre;transform:scaleX(0.9372);transform-origin:0 0;">Editing</div>
<svg style="position:absolute;left:1893px;top:139px;" width="46" height="46" viewBox="0 0 46 46"><rect x="2" y="2" width="42" height="42" fill="none" stroke="#d4522e" stroke-width="2.6"/><rect x="7.5" y="7.5" width="13" height="13" fill="none" stroke="#d4522e" stroke-width="2.4"/><rect x="25.5" y="7.5" width="13" height="13" fill="none" stroke="#d4522e" stroke-width="2.4"/><rect x="7.5" y="25.5" width="13" height="13" fill="none" stroke="#d4522e" stroke-width="2.4"/><rect x="25.5" y="25.5" width="13" height="13" fill="none" stroke="#d4522e" stroke-width="2.4"/></svg>
<div style="left:1884.50px;top:192.28px;font-family:'Liberation Sans', sans-serif;font-size:18.26px;line-height:1;font-weight:400;color:#ffffff;white-space:pre;transform:scaleX(1.0179);transform-origin:0 0;">Add-ins</div>
<div style="left:1887.50px;top:253.76px;font-family:'Liberation Sans', sans-serif;font-size:17.10px;line-height:1;font-weight:400;color:#ffffff;white-space:pre;transform:scaleX(0.9315);transform-origin:0 0;">Add-ins</div>
<svg style="position:absolute;left:1987px;top:139px;" width="46" height="46" viewBox="0 0 46 46">
<rect x="2" y="2" width="41" height="41" fill="none" stroke="#cfcfcf" stroke-width="1.8"/>
<rect x="2" y="2" width="41" height="5" fill="#8f8f8f"/>
<path d="M2 31 L43 31 M14 31 L14 43 M28 31 L28 43" stroke="#cfcfcf" stroke-width="1.4"/>
<circle cx="21" cy="20" r="12" fill="#292929" stroke="#cfcfcf" stroke-width="2"/>
<rect x="13.5" y="18" width="4" height="7" fill="#8f8f8f"/><rect x="18.5" y="13" width="4" height="12" fill="#cfcfcf"/><rect x="23.5" y="15" width="4" height="10" fill="#4ca6e0"/>
<path d="M29.5 28.5 L41 40" stroke="#cfcfcf" stroke-width="2.2"/>
</svg>
<div style="left:1979.50px;top:192.28px;font-family:'Liberation Sans', sans-serif;font-size:18.26px;line-height:1;font-weight:400;color:#ffffff;white-space:pre;transform:scaleX(0.9548);transform-origin:0 0;">Analyze</div>
<div style="left:1991.50px;top:216.68px;font-family:'Liberation Sans', sans-serif;font-size:18.26px;line-height:1;font-weight:400;color:#ffffff;white-space:pre;transform:scaleX(0.9724);transform-origin:0 0;">Data</div>
<div style="left:2156.3px;top:143px;width:112.4px;height:112.2px;background:#ffffff;border-radius:56.2px;"></div>
<div style="left:2182px;top:173.4px;width:61px;height:52.4px;background:#5c62e8;"></div>
<div style="left:2190px;top:181.4px;width:18.699999999999818px;height:14.199999999999989px;background:#ffffff;"></div>
<div style="left:2190px;top:203.2px;width:18.699999999999818px;height:14.5px;background:#ffffff;"></div>
<div style="left:2216px;top:181.4px;width:19px;height:14.199999999999989px;background:#ffffff;"></div>
<div style="left:2216px;top:203.2px;width:19px;height:14.5px;background:#ffffff;"></div>
<div style="left:2294.50px;top:155.91px;font-family:'Liberation Sans', sans-serif;font-size:48.70px;line-height:1;font-weight:700;color:#fff;white-space:pre;transform:scaleX(0.9748);transform-origin:0 0;-webkit-text-stroke:2.2px #fff;">FINM</div>
<svg style="position:absolute;left:0;top:0" width="2902" height="300"><circle cx="2431.5" cy="180" r="13.8" fill="none" stroke="#fff" stroke-width="8.6"/><path d="M2423.5 160.5 L2425.8 165 M2439.5 160.5 L2437.2 165" stroke="#292929" stroke-width="2.2"/><rect x="2426.9" y="154.6" width="9" height="27.4" rx="4.5" fill="#fff"/></svg>
<div style="left:2452.50px;top:155.91px;font-family:'Liberation Sans', sans-serif;font-size:48.70px;line-height:1;font-weight:700;color:#fff;white-space:pre;transform:scaleX(0.8655);transform-origin:0 0;-webkit-text-stroke:2.2px #fff;">DELSLAB</div>
<div style="left:2306.50px;top:206.97px;font-family:'Liberation Sans', sans-serif;font-size:35.80px;line-height:1;font-weight:400;color:#fff;white-space:pre;transform:translateX(-50%);transform-origin:50% 0;-webkit-text-stroke:0.25px #fff;">T</div>
<div style="left:2348.00px;top:206.97px;font-family:'Liberation Sans', sans-serif;font-size:35.80px;line-height:1;font-weight:400;color:#fff;white-space:pre;transform:translateX(-50%);transform-origin:50% 0;-webkit-text-stroke:0.25px #fff;">e</div>
<div style="left:2397.40px;top:206.97px;font-family:'Liberation Sans', sans-serif;font-size:35.80px;line-height:1;font-weight:400;color:#fff;white-space:pre;transform:translateX(-50%);transform-origin:50% 0;-webkit-text-stroke:0.25px #fff;">m</div>
<div style="left:2447.80px;top:206.97px;font-family:'Liberation Sans', sans-serif;font-size:35.80px;line-height:1;font-weight:400;color:#fff;white-space:pre;transform:translateX(-50%);transform-origin:50% 0;-webkit-text-stroke:0.25px #fff;">p</div>
<div style="left:2485.00px;top:206.97px;font-family:'Liberation Sans', sans-serif;font-size:35.80px;line-height:1;font-weight:400;color:#fff;white-space:pre;transform:translateX(-50%);transform-origin:50% 0;-webkit-text-stroke:0.25px #fff;">l</div>
<div style="left:2520.50px;top:206.97px;font-family:'Liberation Sans', sans-serif;font-size:35.80px;line-height:1;font-weight:400;color:#fff;white-space:pre;transform:translateX(-50%);transform-origin:50% 0;-webkit-text-stroke:0.25px #fff;">a</div>
<div style="left:2559.00px;top:206.97px;font-family:'Liberation Sans', sans-serif;font-size:35.80px;line-height:1;font-weight:400;color:#fff;white-space:pre;transform:translateX(-50%);transform-origin:50% 0;-webkit-text-stroke:0.25px #fff;">t</div>
<div style="left:2599.70px;top:206.97px;font-family:'Liberation Sans', sans-serif;font-size:35.80px;line-height:1;font-weight:400;color:#fff;white-space:pre;transform:translateX(-50%);transform-origin:50% 0;-webkit-text-stroke:0.25px #fff;">e</div>
<div style="left:2643.00px;top:206.97px;font-family:'Liberation Sans', sans-serif;font-size:35.80px;line-height:1;font-weight:400;color:#fff;white-space:pre;transform:translateX(-50%);transform-origin:50% 0;-webkit-text-stroke:0.25px #fff;">s</div>
<svg style="position:absolute;left:2848.0px;top:251.15px;" width="18" height="11.700000000000001" viewBox="0 0 18 11.700000000000001"><path d="M2 2 L9.0 9.700000000000001 L16 2" fill="none" stroke="#fff" stroke-width="1.7"/></svg>
<div style="left:47px;top:301px;width:2813px;height:1369px;background:#ffffff;"></div>
<div style="left:11px;top:278px;width:2849px;height:23px;background:#0a0a0a;"></div>
<div style="left:47px;top:278px;width:26px;height:23px;background:#4d4d4d;"></div>
<div style="left:47px;top:299.5px;width:26px;height:1.8px;background:#2b8a50;"></div>
<div style="left:73px;top:278px;width:1px;height:23px;background:#3b3b3b;"></div>
<div style="left:60.00px;top:281.27px;font-family:'Liberation Sans', sans-serif;font-size:18.50px;line-height:1;font-weight:400;color:#e8e8e8;white-space:pre;transform:translateX(-50%);transform-origin:50% 0;">A</div>
<div style="left:168px;top:278px;width:1px;height:23px;background:#3b3b3b;"></div>
<div style="left:120.50px;top:281.27px;font-family:'Liberation Sans', sans-serif;font-size:18.50px;line-height:1;font-weight:400;color:#e8e8e8;white-space:pre;transform:translateX(-50%);transform-origin:50% 0;">B</div>
<div style="left:264px;top:278px;width:1px;height:23px;background:#3b3b3b;"></div>
<div style="left:216.00px;top:281.27px;font-family:'Liberation Sans', sans-serif;font-size:18.50px;line-height:1;font-weight:400;color:#e8e8e8;white-space:pre;transform:translateX(-50%);transform-origin:50% 0;">C</div>
<div style="left:360px;top:278px;width:1px;height:23px;background:#3b3b3b;"></div>
<div style="left:312.00px;top:281.27px;font-family:'Liberation Sans', sans-serif;font-size:18.50px;line-height:1;font-weight:400;color:#e8e8e8;white-space:pre;transform:translateX(-50%);transform-origin:50% 0;">D</div>
<div style="left:456px;top:278px;width:1px;height:23px;background:#3b3b3b;"></div>
<div style="left:408.00px;top:281.27px;font-family:'Liberation Sans', sans-serif;font-size:18.50px;line-height:1;font-weight:400;color:#e8e8e8;white-space:pre;transform:translateX(-50%);transform-origin:50% 0;">E</div>
<div style="left:552px;top:278px;width:1px;height:23px;background:#3b3b3b;"></div>
<div style="left:504.00px;top:281.27px;font-family:'Liberation Sans', sans-serif;font-size:18.50px;line-height:1;font-weight:400;color:#e8e8e8;white-space:pre;transform:translateX(-50%);transform-origin:50% 0;">F</div>
<div style="left:708px;top:278px;width:1px;height:23px;background:#3b3b3b;"></div>
<div style="left:630.00px;top:281.27px;font-family:'Liberation Sans', sans-serif;font-size:18.50px;line-height:1;font-weight:400;color:#e8e8e8;white-space:pre;transform:translateX(-50%);transform-origin:50% 0;">G</div>
<div style="left:864px;top:278px;width:1px;height:23px;background:#3b3b3b;"></div>
<div style="left:786.00px;top:281.27px;font-family:'Liberation Sans', sans-serif;font-size:18.50px;line-height:1;font-weight:400;color:#e8e8e8;white-space:pre;transform:translateX(-50%);transform-origin:50% 0;">H</div>
<div style="left:1020px;top:278px;width:1px;height:23px;background:#3b3b3b;"></div>
<div style="left:942.00px;top:281.27px;font-family:'Liberation Sans', sans-serif;font-size:18.50px;line-height:1;font-weight:400;color:#e8e8e8;white-space:pre;transform:translateX(-50%);transform-origin:50% 0;">I</div>
<div style="left:1176px;top:278px;width:1px;height:23px;background:#3b3b3b;"></div>
<div style="left:1098.00px;top:281.27px;font-family:'Liberation Sans', sans-serif;font-size:18.50px;line-height:1;font-weight:400;color:#e8e8e8;white-space:pre;transform:translateX(-50%);transform-origin:50% 0;">J</div>
<div style="left:1332px;top:278px;width:1px;height:23px;background:#3b3b3b;"></div>
<div style="left:1254.00px;top:281.27px;font-family:'Liberation Sans', sans-serif;font-size:18.50px;line-height:1;font-weight:400;color:#e8e8e8;white-space:pre;transform:translateX(-50%);transform-origin:50% 0;">K</div>
<div style="left:1488px;top:278px;width:1px;height:23px;background:#3b3b3b;"></div>
<div style="left:1410.00px;top:281.27px;font-family:'Liberation Sans', sans-serif;font-size:18.50px;line-height:1;font-weight:400;color:#e8e8e8;white-space:pre;transform:translateX(-50%);transform-origin:50% 0;">L</div>
<div style="left:1644px;top:278px;width:1px;height:23px;background:#3b3b3b;"></div>
<div style="left:1566.00px;top:281.27px;font-family:'Liberation Sans', sans-serif;font-size:18.50px;line-height:1;font-weight:400;color:#e8e8e8;white-space:pre;transform:translateX(-50%);transform-origin:50% 0;">M</div>
<div style="left:1800px;top:278px;width:1px;height:23px;background:#3b3b3b;"></div>
<div style="left:1722.00px;top:281.27px;font-family:'Liberation Sans', sans-serif;font-size:18.50px;line-height:1;font-weight:400;color:#e8e8e8;white-space:pre;transform:translateX(-50%);transform-origin:50% 0;">N</div>
<div style="left:1828px;top:278px;width:1px;height:23px;background:#3b3b3b;"></div>
<div style="left:1814.00px;top:281.27px;font-family:'Liberation Sans', sans-serif;font-size:18.50px;line-height:1;font-weight:400;color:#e8e8e8;white-space:pre;transform:translateX(-50%);transform-origin:50% 0;">O</div>
<div style="left:1920px;top:278px;width:1px;height:23px;background:#3b3b3b;"></div>
<div style="left:1874.00px;top:281.27px;font-family:'Liberation Sans', sans-serif;font-size:18.50px;line-height:1;font-weight:400;color:#e8e8e8;white-space:pre;transform:translateX(-50%);transform-origin:50% 0;">P</div>
<div style="left:2044px;top:278px;width:1px;height:23px;background:#3b3b3b;"></div>
<div style="left:1982.00px;top:281.27px;font-family:'Liberation Sans', sans-serif;font-size:18.50px;line-height:1;font-weight:400;color:#e8e8e8;white-space:pre;transform:translateX(-50%);transform-origin:50% 0;">Q</div>
<div style="left:2136px;top:278px;width:1px;height:23px;background:#3b3b3b;"></div>
<div style="left:2090.00px;top:281.27px;font-family:'Liberation Sans', sans-serif;font-size:18.50px;line-height:1;font-weight:400;color:#e8e8e8;white-space:pre;transform:translateX(-50%);transform-origin:50% 0;">R</div>
<div style="left:2228px;top:278px;width:1px;height:23px;background:#3b3b3b;"></div>
<div style="left:2182.00px;top:281.27px;font-family:'Liberation Sans', sans-serif;font-size:18.50px;line-height:1;font-weight:400;color:#e8e8e8;white-space:pre;transform:translateX(-50%);transform-origin:50% 0;">S</div>
<div style="left:2320px;top:278px;width:1px;height:23px;background:#3b3b3b;"></div>
<div style="left:2274.00px;top:281.27px;font-family:'Liberation Sans', sans-serif;font-size:18.50px;line-height:1;font-weight:400;color:#e8e8e8;white-space:pre;transform:translateX(-50%);transform-origin:50% 0;">T</div>
<div style="left:2412px;top:278px;width:1px;height:23px;background:#3b3b3b;"></div>
<div style="left:2366.00px;top:281.27px;font-family:'Liberation Sans', sans-serif;font-size:18.50px;line-height:1;font-weight:400;color:#e8e8e8;white-space:pre;transform:translateX(-50%);transform-origin:50% 0;">U</div>
<div style="left:2504px;top:278px;width:1px;height:23px;background:#3b3b3b;"></div>
<div style="left:2458.00px;top:281.27px;font-family:'Liberation Sans', sans-serif;font-size:18.50px;line-height:1;font-weight:400;color:#e8e8e8;white-space:pre;transform:translateX(-50%);transform-origin:50% 0;">V</div>
<div style="left:2596px;top:278px;width:1px;height:23px;background:#3b3b3b;"></div>
<div style="left:2550.00px;top:281.27px;font-family:'Liberation Sans', sans-serif;font-size:18.50px;line-height:1;font-weight:400;color:#e8e8e8;white-space:pre;transform:translateX(-50%);transform-origin:50% 0;">W</div>
<div style="left:2688px;top:278px;width:1px;height:23px;background:#3b3b3b;"></div>
<div style="left:2642.00px;top:281.27px;font-family:'Liberation Sans', sans-serif;font-size:18.50px;line-height:1;font-weight:400;color:#e8e8e8;white-space:pre;transform:translateX(-50%);transform-origin:50% 0;">X</div>
<div style="left:2780px;top:278px;width:1px;height:23px;background:#3b3b3b;"></div>
<div style="left:2734.00px;top:281.27px;font-family:'Liberation Sans', sans-serif;font-size:18.50px;line-height:1;font-weight:400;color:#e8e8e8;white-space:pre;transform:translateX(-50%);transform-origin:50% 0;">Y</div>
<div style="left:2860px;top:278px;width:1px;height:23px;background:#3b3b3b;"></div>
<div style="left:2820.00px;top:281.27px;font-family:'Liberation Sans', sans-serif;font-size:18.50px;line-height:1;font-weight:400;color:#e8e8e8;white-space:pre;transform:translateX(-50%);transform-origin:50% 0;">Z</div>
<svg style="position:absolute;left:11px;top:277px;" width="36" height="24" viewBox="0 0 36 24"><path d="M33 4 L33 21 L16 21 Z" fill="#5b5b5b"/></svg>
<div style="left:46px;top:277px;width:1px;height:24px;background:#3b3b3b;"></div>
<div style="left:11px;top:301px;width:36px;height:1369px;background:#0a0a0a;"></div>
<div style="left:11px;top:301px;width:36px;height:38px;background:#6a6a6a;"></div>
<div style="left:47px;top:301px;width:1.8px;height:38px;background:#2b8a50;"></div>
<div style="left:11px;top:301px;width:36px;height:1px;background:#8a8a8a;"></div>
<div style="left:11px;top:338px;width:36px;height:1px;background:#3b3b3b;"></div>
<div style="left:29.00px;top:318.70px;font-family:'Liberation Sans', sans-serif;font-size:18.00px;line-height:1;font-weight:400;color:#e8e8e8;white-space:pre;transform:translateX(-50%);transform-origin:50% 0;">1</div>
<div style="left:11px;top:372px;width:36px;height:1px;background:#3b3b3b;"></div>
<div style="left:29.00px;top:352.70px;font-family:'Liberation Sans', sans-serif;font-size:18.00px;line-height:1;font-weight:400;color:#e8e8e8;white-space:pre;transform:translateX(-50%);transform-origin:50% 0;">2</div>
<div style="left:11px;top:407px;width:36px;height:1px;background:#3b3b3b;"></div>
<div style="left:29.00px;top:387.70px;font-family:'Liberation Sans', sans-serif;font-size:18.00px;line-height:1;font-weight:400;color:#e8e8e8;white-space:pre;transform:translateX(-50%);transform-origin:50% 0;">3</div>
<div style="left:11px;top:432px;width:36px;height:1px;background:#3b3b3b;"></div>
<div style="left:29.00px;top:412.70px;font-family:'Liberation Sans', sans-serif;font-size:18.00px;line-height:1;font-weight:400;color:#e8e8e8;white-space:pre;transform:translateX(-50%);transform-origin:50% 0;">4</div>
<div style="left:11px;top:462px;width:36px;height:1px;background:#3b3b3b;"></div>
<div style="left:29.00px;top:442.70px;font-family:'Liberation Sans', sans-serif;font-size:18.00px;line-height:1;font-weight:400;color:#e8e8e8;white-space:pre;transform:translateX(-50%);transform-origin:50% 0;">5</div>
<div style="left:11px;top:470px;width:36px;height:1px;background:#3b3b3b;"></div>
<div style="left:11px;top:463px;width:36px;height:7px;overflow:hidden"><div style="position:absolute;left:18px;top:-6px;font-size:17.5px;line-height:1;color:#e8e8e8;transform:translateX(-50%)">6</div></div>
<div style="left:11px;top:500px;width:36px;height:1px;background:#3b3b3b;"></div>
<div style="left:29.00px;top:480.70px;font-family:'Liberation Sans', sans-serif;font-size:18.00px;line-height:1;font-weight:400;color:#e8e8e8;white-space:pre;transform:translateX(-50%);transform-origin:50% 0;">7</div>
<div style="left:11px;top:526px;width:36px;height:1px;background:#3b3b3b;"></div>
<div style="left:29.00px;top:506.70px;font-family:'Liberation Sans', sans-serif;font-size:18.00px;line-height:1;font-weight:400;color:#e8e8e8;white-space:pre;transform:translateX(-50%);transform-origin:50% 0;">8</div>
<div style="left:11px;top:562.5px;width:36px;height:1px;background:#3b3b3b;"></div>
<div style="left:29.00px;top:543.20px;font-family:'Liberation Sans', sans-serif;font-size:18.00px;line-height:1;font-weight:400;color:#e8e8e8;white-space:pre;transform:translateX(-50%);transform-origin:50% 0;">9</div>
<div style="left:11px;top:599.5px;width:36px;height:1px;background:#3b3b3b;"></div>
<div style="left:29.00px;top:580.20px;font-family:'Liberation Sans', sans-serif;font-size:18.00px;line-height:1;font-weight:400;color:#e8e8e8;white-space:pre;transform:translateX(-50%);transform-origin:50% 0;">10</div>
<div style="left:11px;top:636.5px;width:36px;height:1px;background:#3b3b3b;"></div>
<div style="left:29.00px;top:617.20px;font-family:'Liberation Sans', sans-serif;font-size:18.00px;line-height:1;font-weight:400;color:#e8e8e8;white-space:pre;transform:translateX(-50%);transform-origin:50% 0;">11</div>
<div style="left:11px;top:673.5px;width:36px;height:1px;background:#3b3b3b;"></div>
<div style="left:29.00px;top:654.20px;font-family:'Liberation Sans', sans-serif;font-size:18.00px;line-height:1;font-weight:400;color:#e8e8e8;white-space:pre;transform:translateX(-50%);transform-origin:50% 0;">12</div>
<div style="left:11px;top:710.5px;width:36px;height:1px;background:#3b3b3b;"></div>
<div style="left:29.00px;top:691.20px;font-family:'Liberation Sans', sans-serif;font-size:18.00px;line-height:1;font-weight:400;color:#e8e8e8;white-space:pre;transform:translateX(-50%);transform-origin:50% 0;">13</div>
<div style="left:11px;top:747.5px;width:36px;height:1px;background:#3b3b3b;"></div>
<div style="left:29.00px;top:728.20px;font-family:'Liberation Sans', sans-serif;font-size:18.00px;line-height:1;font-weight:400;color:#e8e8e8;white-space:pre;transform:translateX(-50%);transform-origin:50% 0;">14</div>
<div style="left:11px;top:784.5px;width:36px;height:1px;background:#3b3b3b;"></div>
<div style="left:29.00px;top:765.20px;font-family:'Liberation Sans', sans-serif;font-size:18.00px;line-height:1;font-weight:400;color:#e8e8e8;white-space:pre;transform:translateX(-50%);transform-origin:50% 0;">15</div>
<div style="left:11px;top:821.5px;width:36px;height:1px;background:#3b3b3b;"></div>
<div style="left:29.00px;top:802.20px;font-family:'Liberation Sans', sans-serif;font-size:18.00px;line-height:1;font-weight:400;color:#e8e8e8;white-space:pre;transform:translateX(-50%);transform-origin:50% 0;">16</div>
<div style="left:11px;top:858.5px;width:36px;height:1px;background:#3b3b3b;"></div>
<div style="left:29.00px;top:839.20px;font-family:'Liberation Sans', sans-serif;font-size:18.00px;line-height:1;font-weight:400;color:#e8e8e8;white-space:pre;transform:translateX(-50%);transform-origin:50% 0;">17</div>
<div style="left:11px;top:895.5px;width:36px;height:1px;background:#3b3b3b;"></div>
<div style="left:29.00px;top:876.20px;font-family:'Liberation Sans', sans-serif;font-size:18.00px;line-height:1;font-weight:400;color:#e8e8e8;white-space:pre;transform:translateX(-50%);transform-origin:50% 0;">18</div>
<div style="left:11px;top:932.5px;width:36px;height:1px;background:#3b3b3b;"></div>
<div style="left:29.00px;top:913.20px;font-family:'Liberation Sans', sans-serif;font-size:18.00px;line-height:1;font-weight:400;color:#e8e8e8;white-space:pre;transform:translateX(-50%);transform-origin:50% 0;">19</div>
<div style="left:11px;top:969.5px;width:36px;height:1px;background:#3b3b3b;"></div>
<div style="left:29.00px;top:950.20px;font-family:'Liberation Sans', sans-serif;font-size:18.00px;line-height:1;font-weight:400;color:#e8e8e8;white-space:pre;transform:translateX(-50%);transform-origin:50% 0;">20</div>
<div style="left:11px;top:1006.5px;width:36px;height:1px;background:#3b3b3b;"></div>
<div style="left:29.00px;top:987.20px;font-family:'Liberation Sans', sans-serif;font-size:18.00px;line-height:1;font-weight:400;color:#e8e8e8;white-space:pre;transform:translateX(-50%);transform-origin:50% 0;">21</div>
<div style="left:11px;top:1043.5px;width:36px;height:1px;background:#3b3b3b;"></div>
<div style="left:29.00px;top:1024.20px;font-family:'Liberation Sans', sans-serif;font-size:18.00px;line-height:1;font-weight:400;color:#e8e8e8;white-space:pre;transform:translateX(-50%);transform-origin:50% 0;">22</div>
<div style="left:11px;top:1080.5px;width:36px;height:1px;background:#3b3b3b;"></div>
<div style="left:29.00px;top:1061.20px;font-family:'Liberation Sans', sans-serif;font-size:18.00px;line-height:1;font-weight:400;color:#e8e8e8;white-space:pre;transform:translateX(-50%);transform-origin:50% 0;">23</div>
<div style="left:11px;top:1117.5px;width:36px;height:1px;background:#3b3b3b;"></div>
<div style="left:29.00px;top:1098.20px;font-family:'Liberation Sans', sans-serif;font-size:18.00px;line-height:1;font-weight:400;color:#e8e8e8;white-space:pre;transform:translateX(-50%);transform-origin:50% 0;">24</div>
<div style="left:11px;top:1154px;width:36px;height:1px;background:#3b3b3b;"></div>
<div style="left:29.00px;top:1132.70px;font-family:'Liberation Sans', sans-serif;font-size:18.00px;line-height:1;font-weight:400;color:#e8e8e8;white-space:pre;transform:translateX(-50%);transform-origin:50% 0;">25</div>
<div style="left:11px;top:1157px;width:36px;height:1px;background:#3b3b3b;"></div>
<div style="left:11px;top:1160px;width:36px;height:1px;background:#3b3b3b;"></div>
<div style="left:11px;top:1194.5px;width:36px;height:1px;background:#3b3b3b;"></div>
<div style="left:29.00px;top:1175.20px;font-family:'Liberation Sans', sans-serif;font-size:18.00px;line-height:1;font-weight:400;color:#e8e8e8;white-space:pre;transform:translateX(-50%);transform-origin:50% 0;">28</div>
<div style="left:11px;top:1200px;width:36px;height:1px;background:#3b3b3b;"></div>
<div style="left:11px;top:1234.5px;width:36px;height:1px;background:#3b3b3b;"></div>
<div style="left:29.00px;top:1215.20px;font-family:'Liberation Sans', sans-serif;font-size:18.00px;line-height:1;font-weight:400;color:#e8e8e8;white-space:pre;transform:translateX(-50%);transform-origin:50% 0;">30</div>
<div style="left:11px;top:1269.5px;width:36px;height:1px;background:#3b3b3b;"></div>
<div style="left:29.00px;top:1250.20px;font-family:'Liberation Sans', sans-serif;font-size:18.00px;line-height:1;font-weight:400;color:#e8e8e8;white-space:pre;transform:translateX(-50%);transform-origin:50% 0;">31</div>
<div style="left:11px;top:1305px;width:36px;height:1px;background:#3b3b3b;"></div>
<div style="left:29.00px;top:1285.70px;font-family:'Liberation Sans', sans-serif;font-size:18.00px;line-height:1;font-weight:400;color:#e8e8e8;white-space:pre;transform:translateX(-50%);transform-origin:50% 0;">32</div>
<div style="left:11px;top:1340px;width:36px;height:1px;background:#3b3b3b;"></div>
<div style="left:29.00px;top:1320.70px;font-family:'Liberation Sans', sans-serif;font-size:18.00px;line-height:1;font-weight:400;color:#e8e8e8;white-space:pre;transform:translateX(-50%);transform-origin:50% 0;">33</div>
<div style="left:11px;top:1376px;width:36px;height:1px;background:#3b3b3b;"></div>
<div style="left:29.00px;top:1356.70px;font-family:'Liberation Sans', sans-serif;font-size:18.00px;line-height:1;font-weight:400;color:#e8e8e8;white-space:pre;transform:translateX(-50%);transform-origin:50% 0;">34</div>
<div style="left:11px;top:1406px;width:36px;height:1px;background:#3b3b3b;"></div>
<div style="left:29.00px;top:1386.70px;font-family:'Liberation Sans', sans-serif;font-size:18.00px;line-height:1;font-weight:400;color:#e8e8e8;white-space:pre;transform:translateX(-50%);transform-origin:50% 0;">35</div>
<div style="left:11px;top:1442px;width:36px;height:1px;background:#3b3b3b;"></div>
<div style="left:29.00px;top:1422.70px;font-family:'Liberation Sans', sans-serif;font-size:18.00px;line-height:1;font-weight:400;color:#e8e8e8;white-space:pre;transform:translateX(-50%);transform-origin:50% 0;">36</div>
<div style="left:11px;top:1448px;width:36px;height:1px;background:#3b3b3b;"></div>
<div style="left:11px;top:1483.5px;width:36px;height:1px;background:#3b3b3b;"></div>
<div style="left:29.00px;top:1464.20px;font-family:'Liberation Sans', sans-serif;font-size:18.00px;line-height:1;font-weight:400;color:#e8e8e8;white-space:pre;transform:translateX(-50%);transform-origin:50% 0;">38</div>
<div style="left:11px;top:1488.5px;width:36px;height:1px;background:#3b3b3b;"></div>
<div style="left:11px;top:1523px;width:36px;height:1px;background:#3b3b3b;"></div>
<div style="left:29.00px;top:1503.70px;font-family:'Liberation Sans', sans-serif;font-size:18.00px;line-height:1;font-weight:400;color:#e8e8e8;white-space:pre;transform:translateX(-50%);transform-origin:50% 0;">40</div>
<div style="left:11px;top:1558px;width:36px;height:1px;background:#3b3b3b;"></div>
<div style="left:29.00px;top:1538.70px;font-family:'Liberation Sans', sans-serif;font-size:18.00px;line-height:1;font-weight:400;color:#e8e8e8;white-space:pre;transform:translateX(-50%);transform-origin:50% 0;">41</div>
<div style="left:11px;top:1593px;width:36px;height:1px;background:#3b3b3b;"></div>
<div style="left:29.00px;top:1573.70px;font-family:'Liberation Sans', sans-serif;font-size:18.00px;line-height:1;font-weight:400;color:#e8e8e8;white-space:pre;transform:translateX(-50%);transform-origin:50% 0;">42</div>
<div style="left:11px;top:1623.5px;width:36px;height:1px;background:#3b3b3b;"></div>
<div style="left:29.00px;top:1604.20px;font-family:'Liberation Sans', sans-serif;font-size:18.00px;line-height:1;font-weight:400;color:#e8e8e8;white-space:pre;transform:translateX(-50%);transform-origin:50% 0;">43</div>
<div style="left:11px;top:1649px;width:36px;height:1px;background:#3b3b3b;"></div>
<div style="left:29.00px;top:1629.70px;font-family:'Liberation Sans', sans-serif;font-size:18.00px;line-height:1;font-weight:400;color:#e8e8e8;white-space:pre;transform:translateX(-50%);transform-origin:50% 0;">44</div>
<div style="left:11px;top:1669px;width:36px;height:1px;background:#3b3b3b;"></div>
<div style="left:11px;top:1650px;width:36px;height:20px;overflow:hidden"><div style="position:absolute;left:18px;top:5.20px;font-size:18px;line-height:1;color:#e8e8e8;transform:translateX(-50%)">45</div></div>
<div style="left:47px;top:433px;width:2813px;height:1px;background:#b5b5b5;"></div>
<div style="left:2860px;top:277px;width:31px;height:1393px;background:#0c0c0c;"></div>
<div style="left:2864px;top:279px;width:24px;height:1389px;background:#131313;border-radius:12px;"></div>
<svg style="position:absolute;left:2864px;top:283px;" width="24" height="16" viewBox="0 0 24 16"><path d="M12 3.5 L18 12 L6 12 Z" fill="#9c9c9c" stroke="#9c9c9c" stroke-width="1.5" stroke-linejoin="round"/></svg>
<div style="left:2870px;top:304px;width:12px;height:1336px;background:#9c9c9c;border-radius:6px;"></div>
<svg style="position:absolute;left:2864px;top:1651px;" width="24" height="16" viewBox="0 0 24 16"><path d="M6 4 L18 4 L12 12.5 Z" fill="#9c9c9c" stroke="#9c9c9c" stroke-width="1.5" stroke-linejoin="round"/></svg>
<div style="left:80.00px;top:302.45px;font-family:'Liberation Sans', sans-serif;font-size:35.94px;line-height:1;font-weight:700;color:#262626;white-space:pre;transform:scaleX(1.0026);transform-origin:0 0;-webkit-text-stroke:0.45px currentColor;">Returns on Invested Capital</div>
<div style="left:77.00px;top:341.38px;font-family:'Liberation Sans', sans-serif;font-size:30.14px;line-height:1;font-weight:700;color:#000;white-space:pre;transform:scaleX(0.9976);transform-origin:0 0;-webkit-text-stroke:0.45px currentColor;">ABC Company Inc.</div>
<div style="left:75.80px;top:380.89px;font-family:'Liberation Sans', sans-serif;font-size:19.42px;line-height:1;font-weight:700;color:#2f76e6;white-space:pre;transform:scaleX(1.0445);transform-origin:0 0;-webkit-text-stroke:0.45px currentColor;">Go to Table of Contents</div>
<div style="left:76px;top:399px;width:227px;height:2px;background:#2f76e6;"></div>
<div style="left:72px;top:434px;width:481px;height:30px;background:#4b4fd0;"></div>
<div style="left:72px;top:471px;width:481px;height:31px;background:#4bb3e6;"></div>
<div style="left:210.00px;top:435.38px;font-family:'Liberation Sans', sans-serif;font-size:26.38px;line-height:1;font-weight:700;color:#fff;white-space:pre;transform:scaleX(0.9563);transform-origin:0 0;-webkit-text-stroke:0.45px currentColor;">Years to payback</div>
<div style="left:294.00px;top:473.37px;font-family:'Liberation Sans', sans-serif;font-size:25.22px;line-height:1;font-weight:700;color:#fff;white-space:pre;transform:scaleX(1.0985);transform-origin:0 0;-webkit-text-stroke:0.45px currentColor;">0.9</div>
<div style="left:708px;top:434px;width:469px;height:30px;background:#4b4fd0;"></div>
<div style="left:708px;top:471px;width:469px;height:31px;background:#4bb3e6;"></div>
<div style="left:754.00px;top:435.38px;font-family:'Liberation Sans', sans-serif;font-size:26.38px;line-height:1;font-weight:700;color:#fff;white-space:pre;transform:scaleX(0.9791);transform-origin:0 0;-webkit-text-stroke:0.45px currentColor;">5-Year Cash Generated ($&#x27;000)</div>
<div style="left:897.00px;top:473.37px;font-family:'Liberation Sans', sans-serif;font-size:25.22px;line-height:1;font-weight:700;color:#fff;white-space:pre;transform:scaleX(1.0701);transform-origin:0 0;-webkit-text-stroke:0.45px currentColor;">25,295</div>
<div style="left:1332px;top:434px;width:469px;height:30px;background:#4b4fd0;"></div>
<div style="left:1332px;top:471px;width:469px;height:31px;background:#4bb3e6;"></div>
<div style="left:1493.00px;top:435.38px;font-family:'Liberation Sans', sans-serif;font-size:26.38px;line-height:1;font-weight:700;color:#fff;white-space:pre;transform:scaleX(1.0002);transform-origin:0 0;-webkit-text-stroke:0.45px currentColor;">ROIC - 2030</div>
<div style="left:1526.00px;top:473.37px;font-family:'Liberation Sans', sans-serif;font-size:25.22px;line-height:1;font-weight:700;color:#fff;white-space:pre;transform:scaleX(1.1544);transform-origin:0 0;-webkit-text-stroke:0.45px currentColor;">67.0%</div>
<div style="left:72px;top:527px;width:1729px;height:37px;background:#4b4fd0;"></div>
<div style="left:625.00px;top:531.20px;font-family:'Liberation Sans', sans-serif;font-size:30.00px;line-height:1;font-weight:700;color:#fff;white-space:pre;transform:scaleX(1.0493);transform-origin:0 0;-webkit-text-stroke:0.45px currentColor;">Returns on Invested Capital Chart ($&#x27;000)</div>
<div style="left:72px;top:1118.5px;width:1729px;height:36.5px;background:#4b4fd0;"></div>
<div style="left:670.50px;top:1122.62px;font-family:'Liberation Sans', sans-serif;font-size:29.86px;line-height:1;font-weight:700;color:#fff;white-space:pre;transform:scaleX(1.0588);transform-origin:0 0;-webkit-text-stroke:0.45px currentColor;">Returns on Invested Capital ($&#x27;000)</div>
<div style="left:73px;top:1160.2px;width:1727px;height:34.5px;background:#6e73e8;"></div>
<div style="left:1019px;top:1160.2px;width:2px;height:34.5px;background:#ffffff;"></div>
<div style="left:1175px;top:1160.2px;width:2px;height:34.5px;background:#ffffff;"></div>
<div style="left:1331px;top:1160.2px;width:2px;height:34.5px;background:#ffffff;"></div>
<div style="left:1487px;top:1160.2px;width:2px;height:34.5px;background:#ffffff;"></div>
<div style="left:1643px;top:1160.2px;width:2px;height:34.5px;background:#ffffff;"></div>
<div style="left:85.00px;top:1167.71px;font-family:'Liberation Sans', sans-serif;font-size:20.58px;line-height:1;font-weight:700;color:#fff;white-space:pre;transform:scaleX(0.9664);transform-origin:0 0;-webkit-text-stroke:0.45px currentColor;">Fiscal Year</div>
<div style="left:1098.00px;top:1168.39px;font-family:'Liberation Sans', sans-serif;font-size:18.84px;line-height:1;font-weight:700;color:#fff;white-space:pre;transform:translateX(-50%) scaleX(1.1);transform-origin:50% 0;-webkit-text-stroke:0.45px currentColor;">2026</div>
<div style="left:1254.00px;top:1168.39px;font-family:'Liberation Sans', sans-serif;font-size:18.84px;line-height:1;font-weight:700;color:#fff;white-space:pre;transform:translateX(-50%) scaleX(1.1);transform-origin:50% 0;-webkit-text-stroke:0.45px currentColor;">2027</div>
<div style="left:1410.00px;top:1168.39px;font-family:'Liberation Sans', sans-serif;font-size:18.84px;line-height:1;font-weight:700;color:#fff;white-space:pre;transform:translateX(-50%) scaleX(1.1);transform-origin:50% 0;-webkit-text-stroke:0.45px currentColor;">2028</div>
<div style="left:1566.00px;top:1168.39px;font-family:'Liberation Sans', sans-serif;font-size:18.84px;line-height:1;font-weight:700;color:#fff;white-space:pre;transform:translateX(-50%) scaleX(1.1);transform-origin:50% 0;-webkit-text-stroke:0.45px currentColor;">2029</div>
<div style="left:1722.00px;top:1168.39px;font-family:'Liberation Sans', sans-serif;font-size:18.84px;line-height:1;font-weight:700;color:#fff;white-space:pre;transform:translateX(-50%) scaleX(1.1);transform-origin:50% 0;-webkit-text-stroke:0.45px currentColor;">2030</div>
<div style="left:94.00px;top:1207.60px;font-family:'Liberation Sans', sans-serif;font-size:20.00px;line-height:1;font-weight:400;color:#000;white-space:pre;transform:scaleX(0.9378);transform-origin:0 0;">Debts</div>
<div style="right:1736.00px;top:1208.69px;font-family:'Liberation Sans', sans-serif;font-size:18.84px;line-height:1;font-weight:400;color:#000;white-space:pre;transform:scaleX(1.0);transform-origin:100% 0;">283</div>
<div style="right:1580.00px;top:1208.69px;font-family:'Liberation Sans', sans-serif;font-size:18.84px;line-height:1;font-weight:400;color:#000;white-space:pre;transform:scaleX(1.0);transform-origin:100% 0;">237</div>
<div style="right:1424.00px;top:1208.69px;font-family:'Liberation Sans', sans-serif;font-size:18.84px;line-height:1;font-weight:400;color:#000;white-space:pre;transform:scaleX(1.0);transform-origin:100% 0;">190</div>
<div style="right:1268.00px;top:1208.69px;font-family:'Liberation Sans', sans-serif;font-size:18.84px;line-height:1;font-weight:400;color:#000;white-space:pre;transform:scaleX(1.0);transform-origin:100% 0;">141</div>
<div style="right:1112.00px;top:1208.69px;font-family:'Liberation Sans', sans-serif;font-size:18.84px;line-height:1;font-weight:400;color:#000;white-space:pre;transform:scaleX(1.0);transform-origin:100% 0;">90</div>
<div style="left:94.00px;top:1242.40px;font-family:'Liberation Sans', sans-serif;font-size:20.00px;line-height:1;font-weight:400;color:#000;white-space:pre;transform:scaleX(0.9444);transform-origin:0 0;">Equity</div>
<div style="right:1736.00px;top:1243.29px;font-family:'Liberation Sans', sans-serif;font-size:18.84px;line-height:1;font-weight:400;color:#000;white-space:pre;transform:scaleX(1.0);transform-origin:100% 0;">847</div>
<div style="right:1580.00px;top:1243.29px;font-family:'Liberation Sans', sans-serif;font-size:18.84px;line-height:1;font-weight:400;color:#000;white-space:pre;transform:scaleX(1.0);transform-origin:100% 0;">2,004</div>
<div style="right:1424.00px;top:1243.29px;font-family:'Liberation Sans', sans-serif;font-size:18.84px;line-height:1;font-weight:400;color:#000;white-space:pre;transform:scaleX(1.0);transform-origin:100% 0;">5,512</div>
<div style="right:1268.00px;top:1243.29px;font-family:'Liberation Sans', sans-serif;font-size:18.84px;line-height:1;font-weight:400;color:#000;white-space:pre;transform:scaleX(1.0);transform-origin:100% 0;">12,907</div>
<div style="right:1112.00px;top:1243.29px;font-family:'Liberation Sans', sans-serif;font-size:18.84px;line-height:1;font-weight:400;color:#000;white-space:pre;transform:scaleX(1.0);transform-origin:100% 0;">26,023</div>
<div style="left:72px;top:1270.3px;width:1729px;height:35.5px;background:#4bb3e6;"></div>
<div style="left:76.50px;top:1277.68px;font-family:'Liberation Sans', sans-serif;font-size:22.61px;line-height:1;font-weight:700;color:#fff;white-space:pre;transform:scaleX(1.0546);transform-origin:0 0;-webkit-text-stroke:0.45px currentColor;">Total Invested Capital</div>
<div style="right:1737.50px;top:1279.05px;font-family:'Liberation Sans', sans-serif;font-size:19.71px;line-height:1;font-weight:700;color:#fff;white-space:pre;transform:scaleX(1.1);transform-origin:100% 0;-webkit-text-stroke:0.45px currentColor;">1,130</div>
<div style="right:1581.50px;top:1279.05px;font-family:'Liberation Sans', sans-serif;font-size:19.71px;line-height:1;font-weight:700;color:#fff;white-space:pre;transform:scaleX(1.1);transform-origin:100% 0;-webkit-text-stroke:0.45px currentColor;">2,242</div>
<div style="right:1425.50px;top:1279.05px;font-family:'Liberation Sans', sans-serif;font-size:19.71px;line-height:1;font-weight:700;color:#fff;white-space:pre;transform:scaleX(1.1);transform-origin:100% 0;-webkit-text-stroke:0.45px currentColor;">5,702</div>
<div style="right:1269.50px;top:1279.05px;font-family:'Liberation Sans', sans-serif;font-size:19.71px;line-height:1;font-weight:700;color:#fff;white-space:pre;transform:scaleX(1.1);transform-origin:100% 0;-webkit-text-stroke:0.45px currentColor;">13,047</div>
<div style="right:1113.50px;top:1279.05px;font-family:'Liberation Sans', sans-serif;font-size:19.71px;line-height:1;font-weight:700;color:#fff;white-space:pre;transform:scaleX(1.1);transform-origin:100% 0;-webkit-text-stroke:0.45px currentColor;">26,112</div>
<div style="left:94.00px;top:1313.80px;font-family:'Liberation Sans', sans-serif;font-size:20.00px;line-height:1;font-weight:400;color:#000;white-space:pre;transform:scaleX(0.9505);transform-origin:0 0;">Net Operating Profit After Tax (NOPAT)</div>
<div style="right:1736.00px;top:1314.39px;font-family:'Liberation Sans', sans-serif;font-size:18.84px;line-height:1;font-weight:400;color:#000;white-space:pre;transform:scaleX(1.0);transform-origin:100% 0;">160</div>
<div style="right:1580.00px;top:1314.39px;font-family:'Liberation Sans', sans-serif;font-size:18.84px;line-height:1;font-weight:400;color:#000;white-space:pre;transform:scaleX(1.0);transform-origin:100% 0;">1,171</div>
<div style="right:1424.00px;top:1314.39px;font-family:'Liberation Sans', sans-serif;font-size:18.84px;line-height:1;font-weight:400;color:#000;white-space:pre;transform:scaleX(1.0);transform-origin:100% 0;">3,518</div>
<div style="right:1268.00px;top:1314.39px;font-family:'Liberation Sans', sans-serif;font-size:18.84px;line-height:1;font-weight:400;color:#000;white-space:pre;transform:scaleX(1.0);transform-origin:100% 0;">7,403</div>
<div style="right:1112.00px;top:1314.39px;font-family:'Liberation Sans', sans-serif;font-size:18.84px;line-height:1;font-weight:400;color:#000;white-space:pre;transform:scaleX(1.0);transform-origin:100% 0;">13,122</div>
<div style="left:72px;top:1341.3px;width:1729px;height:36px;background:#4bb3e6;"></div>
<div style="left:77.00px;top:1349.32px;font-family:'Liberation Sans', sans-serif;font-size:21.74px;line-height:1;font-weight:700;color:#fff;white-space:pre;transform:scaleX(1.1142);transform-origin:0 0;-webkit-text-stroke:0.45px currentColor;">ROIC</div>
<div style="right:1729.50px;top:1350.64px;font-family:'Liberation Sans', sans-serif;font-size:19.13px;line-height:1;font-weight:700;color:#fff;white-space:pre;transform:scaleX(1.17);transform-origin:100% 0;-webkit-text-stroke:0.45px currentColor;">14.2%</div>
<div style="right:1573.50px;top:1350.64px;font-family:'Liberation Sans', sans-serif;font-size:19.13px;line-height:1;font-weight:700;color:#fff;white-space:pre;transform:scaleX(1.17);transform-origin:100% 0;-webkit-text-stroke:0.45px currentColor;">69.5%</div>
<div style="right:1417.50px;top:1350.64px;font-family:'Liberation Sans', sans-serif;font-size:19.13px;line-height:1;font-weight:700;color:#fff;white-space:pre;transform:scaleX(1.17);transform-origin:100% 0;-webkit-text-stroke:0.45px currentColor;">88.6%</div>
<div style="right:1261.50px;top:1350.64px;font-family:'Liberation Sans', sans-serif;font-size:19.13px;line-height:1;font-weight:700;color:#fff;white-space:pre;transform:scaleX(1.17);transform-origin:100% 0;-webkit-text-stroke:0.45px currentColor;">79.0%</div>
<div style="right:1105.50px;top:1350.64px;font-family:'Liberation Sans', sans-serif;font-size:19.13px;line-height:1;font-weight:700;color:#fff;white-space:pre;transform:scaleX(1.17);transform-origin:100% 0;-webkit-text-stroke:0.45px currentColor;">67.0%</div>
<div style="left:72px;top:1407px;width:1729px;height:36.5px;background:#4b4fd0;"></div>
<div style="left:698.50px;top:1410.92px;font-family:'Liberation Sans', sans-serif;font-size:29.86px;line-height:1;font-weight:700;color:#fff;white-space:pre;transform:scaleX(1.0300);transform-origin:0 0;-webkit-text-stroke:0.45px currentColor;">Payback Period Analysis ($&#x27;000)</div>
<div style="left:73px;top:1449px;width:1727px;height:34.5px;background:#6e73e8;"></div>
<div style="left:1019px;top:1449px;width:2px;height:34.5px;background:#ffffff;"></div>
<div style="left:1175px;top:1449px;width:2px;height:34.5px;background:#ffffff;"></div>
<div style="left:1331px;top:1449px;width:2px;height:34.5px;background:#ffffff;"></div>
<div style="left:1487px;top:1449px;width:2px;height:34.5px;background:#ffffff;"></div>
<div style="left:1643px;top:1449px;width:2px;height:34.5px;background:#ffffff;"></div>
<div style="left:85.00px;top:1456.41px;font-family:'Liberation Sans', sans-serif;font-size:20.58px;line-height:1;font-weight:700;color:#fff;white-space:pre;transform:scaleX(0.9664);transform-origin:0 0;-webkit-text-stroke:0.45px currentColor;">Fiscal Year</div>
<div style="left:1098.00px;top:1457.09px;font-family:'Liberation Sans', sans-serif;font-size:18.84px;line-height:1;font-weight:700;color:#fff;white-space:pre;transform:translateX(-50%) scaleX(1.1);transform-origin:50% 0;-webkit-text-stroke:0.45px currentColor;">2026</div>
<div style="left:1254.00px;top:1457.09px;font-family:'Liberation Sans', sans-serif;font-size:18.84px;line-height:1;font-weight:700;color:#fff;white-space:pre;transform:translateX(-50%) scaleX(1.1);transform-origin:50% 0;-webkit-text-stroke:0.45px currentColor;">2027</div>
<div style="left:1410.00px;top:1457.09px;font-family:'Liberation Sans', sans-serif;font-size:18.84px;line-height:1;font-weight:700;color:#fff;white-space:pre;transform:translateX(-50%) scaleX(1.1);transform-origin:50% 0;-webkit-text-stroke:0.45px currentColor;">2028</div>
<div style="left:1566.00px;top:1457.09px;font-family:'Liberation Sans', sans-serif;font-size:18.84px;line-height:1;font-weight:700;color:#fff;white-space:pre;transform:translateX(-50%) scaleX(1.1);transform-origin:50% 0;-webkit-text-stroke:0.45px currentColor;">2029</div>
<div style="left:1722.00px;top:1457.09px;font-family:'Liberation Sans', sans-serif;font-size:18.84px;line-height:1;font-weight:700;color:#fff;white-space:pre;transform:translateX(-50%) scaleX(1.1);transform-origin:50% 0;-webkit-text-stroke:0.45px currentColor;">2030</div>
<div style="left:94.00px;top:1496.30px;font-family:'Liberation Sans', sans-serif;font-size:20.00px;line-height:1;font-weight:400;color:#000;white-space:pre;transform:scaleX(0.9707);transform-origin:0 0;">Net Profit After Tax</div>
<div style="right:1736.00px;top:1498.19px;font-family:'Liberation Sans', sans-serif;font-size:18.84px;line-height:1;font-weight:400;color:#000;white-space:pre;transform:scaleX(1.0);transform-origin:100% 0;">160</div>
<div style="right:1580.00px;top:1498.19px;font-family:'Liberation Sans', sans-serif;font-size:18.84px;line-height:1;font-weight:400;color:#000;white-space:pre;transform:scaleX(1.0);transform-origin:100% 0;">1,171</div>
<div style="right:1424.00px;top:1498.19px;font-family:'Liberation Sans', sans-serif;font-size:18.84px;line-height:1;font-weight:400;color:#000;white-space:pre;transform:scaleX(1.0);transform-origin:100% 0;">3,518</div>
<div style="right:1268.00px;top:1498.19px;font-family:'Liberation Sans', sans-serif;font-size:18.84px;line-height:1;font-weight:400;color:#000;white-space:pre;transform:scaleX(1.0);transform-origin:100% 0;">7,403</div>
<div style="right:1112.00px;top:1498.19px;font-family:'Liberation Sans', sans-serif;font-size:18.84px;line-height:1;font-weight:400;color:#000;white-space:pre;transform:scaleX(1.0);transform-origin:100% 0;">13,122</div>
<div style="left:94.00px;top:1531.50px;font-family:'Liberation Sans', sans-serif;font-size:20.00px;line-height:1;font-weight:400;color:#000;white-space:pre;transform:scaleX(0.8111);transform-origin:0 0;">CAPEX</div>
<div style="right:1729.50px;top:1530.29px;font-family:'Liberation Sans', sans-serif;font-size:18.84px;line-height:1;font-weight:400;color:#000;white-space:pre;">(78)</div>
<div style="left:1315px;top:1541px;width:6px;height:2px;background:#000;"></div>
<div style="left:1471px;top:1541px;width:6px;height:2px;background:#000;"></div>
<div style="left:1627px;top:1541px;width:6px;height:2px;background:#000;"></div>
<div style="left:1783px;top:1541px;width:6px;height:2px;background:#000;"></div>
<div style="left:72px;top:1559.4px;width:1729px;height:35px;background:#4bb3e6;"></div>
<div style="left:76.50px;top:1566.38px;font-family:'Liberation Sans', sans-serif;font-size:22.61px;line-height:1;font-weight:700;color:#fff;white-space:pre;transform:scaleX(1.0300);transform-origin:0 0;-webkit-text-stroke:0.45px currentColor;">Cumulative Cash Generated (Spent)</div>
<div style="right:1737.50px;top:1568.15px;font-family:'Liberation Sans', sans-serif;font-size:19.71px;line-height:1;font-weight:700;color:#fff;white-space:pre;transform:scaleX(1.1);transform-origin:100% 0;-webkit-text-stroke:0.45px currentColor;">82</div>
<div style="right:1581.50px;top:1568.15px;font-family:'Liberation Sans', sans-serif;font-size:19.71px;line-height:1;font-weight:700;color:#fff;white-space:pre;transform:scaleX(1.1);transform-origin:100% 0;-webkit-text-stroke:0.45px currentColor;">1,253</div>
<div style="right:1425.50px;top:1568.15px;font-family:'Liberation Sans', sans-serif;font-size:19.71px;line-height:1;font-weight:700;color:#fff;white-space:pre;transform:scaleX(1.1);transform-origin:100% 0;-webkit-text-stroke:0.45px currentColor;">4,771</div>
<div style="right:1269.50px;top:1568.15px;font-family:'Liberation Sans', sans-serif;font-size:19.71px;line-height:1;font-weight:700;color:#fff;white-space:pre;transform:scaleX(1.1);transform-origin:100% 0;-webkit-text-stroke:0.45px currentColor;">12,174</div>
<div style="right:1113.50px;top:1568.15px;font-family:'Liberation Sans', sans-serif;font-size:19.71px;line-height:1;font-weight:700;color:#fff;white-space:pre;transform:scaleX(1.1);transform-origin:100% 0;-webkit-text-stroke:0.45px currentColor;">25,295</div>
<div style="left:76.00px;top:1599.21px;font-family:'Liberation Sans', sans-serif;font-size:20.58px;line-height:1;font-weight:700;color:#1f1f1f;white-space:pre;transform:scaleX(0.9545);transform-origin:0 0;-webkit-text-stroke:0.45px currentColor;">Payback year</div>
<div style="left:1020px;top:1596px;width:157px;height:29px;background:#2eb5a5;"></div>
<div style="left:1099.00px;top:1599.85px;font-family:'Liberation Sans', sans-serif;font-size:19.71px;line-height:1;font-weight:700;color:#1f1f1f;white-space:pre;transform:translateX(-50%);transform-origin:50% 0;-webkit-text-stroke:0.45px currentColor;">1</div>
<div style="left:1250.0px;top:1609.5px;width:8px;height:3px;background:#1f1f1f;"></div>
<div style="left:1406.0px;top:1609.5px;width:8px;height:3px;background:#1f1f1f;"></div>
<div style="left:1562.0px;top:1609.5px;width:8px;height:3px;background:#1f1f1f;"></div>
<div style="left:1718.0px;top:1609.5px;width:8px;height:3px;background:#1f1f1f;"></div>
<svg style="position:absolute;left:0;top:0" width="2902" height="1762"><rect x="211" y="663.90" width="1589" height="1.3" fill="#62add0"/><rect x="211" y="722.73" width="1589" height="1.3" fill="#62add0"/><rect x="211" y="781.56" width="1589" height="1.3" fill="#62add0"/><rect x="211" y="840.39" width="1589" height="1.3" fill="#62add0"/><rect x="211" y="899.22" width="1589" height="1.3" fill="#62add0"/><rect x="211" y="958.05" width="1589" height="1.3" fill="#62add0"/><rect x="248.90" y="1004.20" width="121.5" height="13.30" fill="#4bb3e6"/><rect x="370.40" y="1015.62" width="122" height="1.88" fill="#f07b6f"/><rect x="566.70" y="991.12" width="121.5" height="26.38" fill="#4bb3e6"/><rect x="688.20" y="1003.72" width="122" height="13.78" fill="#f07b6f"/><rect x="884.50" y="950.41" width="121.5" height="67.09" fill="#4bb3e6"/><rect x="1006.00" y="976.10" width="122" height="41.40" fill="#f07b6f"/><rect x="1202.30" y="863.98" width="121.5" height="153.52" fill="#4bb3e6"/><rect x="1323.80" y="930.39" width="122" height="87.11" fill="#f07b6f"/><rect x="1520.10" y="710.25" width="121.5" height="307.25" fill="#4bb3e6"/><rect x="1641.60" y="863.10" width="122" height="154.40" fill="#f07b6f"/><rect x="211" y="1016.2" width="1590" height="2.2" fill="#4aa3d9"/><rect x="210.60" y="1016.5" width="1.8" height="7" fill="#4aa3d9"/><rect x="528.40" y="1016.5" width="1.8" height="7" fill="#4aa3d9"/><rect x="846.20" y="1016.5" width="1.8" height="7" fill="#4aa3d9"/><rect x="1164.00" y="1016.5" width="1.8" height="7" fill="#4aa3d9"/><rect x="1481.80" y="1016.5" width="1.8" height="7" fill="#4aa3d9"/><rect x="1799.60" y="1016.5" width="1.8" height="7" fill="#4aa3d9"/><polyline points="370.40,966.57 688.20,771.37 1006.00,703.94 1323.80,737.83 1641.60,780.19" fill="none" stroke="#2eb5a5" stroke-width="5" stroke-linejoin="round"/><circle cx="370.40" cy="966.57" r="39.4" fill="#2eb5a5"/><circle cx="688.20" cy="771.37" r="39.4" fill="#2eb5a5"/><circle cx="1006.00" cy="703.94" r="39.4" fill="#2eb5a5"/><circle cx="1323.80" cy="737.83" r="39.4" fill="#2eb5a5"/><circle cx="1641.60" cy="780.19" r="39.4" fill="#2eb5a5"/></svg>
<div style="left:339.40px;top:958.17px;font-family:'Liberation Sans', sans-serif;font-size:20.00px;line-height:1;font-weight:700;color:#fff;white-space:pre;transform:scaleX(1.1196);transform-origin:0 0;-webkit-text-stroke:0.45px currentColor;">14.2%</div>
<div style="left:657.20px;top:762.97px;font-family:'Liberation Sans', sans-serif;font-size:20.00px;line-height:1;font-weight:700;color:#fff;white-space:pre;transform:scaleX(1.1196);transform-origin:0 0;-webkit-text-stroke:0.45px currentColor;">69.5%</div>
<div style="left:975.00px;top:695.54px;font-family:'Liberation Sans', sans-serif;font-size:20.00px;line-height:1;font-weight:700;color:#fff;white-space:pre;transform:scaleX(1.1196);transform-origin:0 0;-webkit-text-stroke:0.45px currentColor;">88.6%</div>
<div style="left:1292.80px;top:729.43px;font-family:'Liberation Sans', sans-serif;font-size:20.00px;line-height:1;font-weight:700;color:#fff;white-space:pre;transform:scaleX(1.1196);transform-origin:0 0;-webkit-text-stroke:0.45px currentColor;">79.0%</div>
<div style="left:1610.60px;top:771.79px;font-family:'Liberation Sans', sans-serif;font-size:20.00px;line-height:1;font-weight:700;color:#fff;white-space:pre;transform:scaleX(1.1196);transform-origin:0 0;-webkit-text-stroke:0.45px currentColor;">67.0%</div>
<div style="right:2713.50px;top:653.78px;font-family:'Liberation Sans', sans-serif;font-size:20.14px;line-height:1;font-weight:700;color:#000;white-space:pre;transform:scaleX(1.12);transform-origin:100% 0;-webkit-text-stroke:0.45px currentColor;">30,000</div>
<div style="right:2713.50px;top:712.61px;font-family:'Liberation Sans', sans-serif;font-size:20.14px;line-height:1;font-weight:700;color:#000;white-space:pre;transform:scaleX(1.12);transform-origin:100% 0;-webkit-text-stroke:0.45px currentColor;">25,000</div>
<div style="right:2713.50px;top:771.44px;font-family:'Liberation Sans', sans-serif;font-size:20.14px;line-height:1;font-weight:700;color:#000;white-space:pre;transform:scaleX(1.12);transform-origin:100% 0;-webkit-text-stroke:0.45px currentColor;">20,000</div>
<div style="right:2713.50px;top:830.27px;font-family:'Liberation Sans', sans-serif;font-size:20.14px;line-height:1;font-weight:700;color:#000;white-space:pre;transform:scaleX(1.12);transform-origin:100% 0;-webkit-text-stroke:0.45px currentColor;">15,000</div>
<div style="right:2713.50px;top:889.10px;font-family:'Liberation Sans', sans-serif;font-size:20.14px;line-height:1;font-weight:700;color:#000;white-space:pre;transform:scaleX(1.12);transform-origin:100% 0;-webkit-text-stroke:0.45px currentColor;">10,000</div>
<div style="right:2713.50px;top:947.93px;font-family:'Liberation Sans', sans-serif;font-size:20.14px;line-height:1;font-weight:700;color:#000;white-space:pre;transform:scaleX(1.12);transform-origin:100% 0;-webkit-text-stroke:0.45px currentColor;">5,000</div>
<div style="left:181px;top:1017px;width:7px;height:3px;background:#000;"></div>
<div style="left:343.90px;top:1070.28px;font-family:'Liberation Sans', sans-serif;font-size:22.03px;line-height:1;font-weight:700;color:#000;white-space:pre;transform:scaleX(1.1228);transform-origin:0 0;-webkit-text-stroke:0.45px currentColor;">2026</div>
<div style="left:661.70px;top:1070.28px;font-family:'Liberation Sans', sans-serif;font-size:22.03px;line-height:1;font-weight:700;color:#000;white-space:pre;transform:scaleX(1.1228);transform-origin:0 0;-webkit-text-stroke:0.45px currentColor;">2027</div>
<div style="left:979.50px;top:1070.28px;font-family:'Liberation Sans', sans-serif;font-size:22.03px;line-height:1;font-weight:700;color:#000;white-space:pre;transform:scaleX(1.1228);transform-origin:0 0;-webkit-text-stroke:0.45px currentColor;">2028</div>
<div style="left:1297.30px;top:1070.28px;font-family:'Liberation Sans', sans-serif;font-size:22.03px;line-height:1;font-weight:700;color:#000;white-space:pre;transform:scaleX(1.1228);transform-origin:0 0;-webkit-text-stroke:0.45px currentColor;">2029</div>
<div style="left:1615.10px;top:1070.28px;font-family:'Liberation Sans', sans-serif;font-size:22.03px;line-height:1;font-weight:700;color:#000;white-space:pre;transform:scaleX(1.1228);transform-origin:0 0;-webkit-text-stroke:0.45px currentColor;">2030</div>
<div style="left:278px;top:596.4px;width:46px;height:12.5px;background:#4bb3e6;"></div>
<div style="left:328.50px;top:588.44px;font-family:'Liberation Sans', sans-serif;font-size:25.36px;line-height:1;font-weight:700;color:#000;white-space:pre;transform:scaleX(1.0222);transform-origin:0 0;-webkit-text-stroke:0.45px currentColor;">Total Invested Capital</div>
<div style="left:775px;top:596.4px;width:46px;height:12.5px;background:#f07b6f;"></div>
<div style="left:826.00px;top:588.44px;font-family:'Liberation Sans', sans-serif;font-size:25.36px;line-height:1;font-weight:700;color:#000;white-space:pre;transform:scaleX(1.0237);transform-origin:0 0;-webkit-text-stroke:0.45px currentColor;">Net Operating Profit After Tax (NOPAT)</div>
<div style="left:1479px;top:599.6px;width:50px;height:4.2px;background:#2eb5a5;border-radius:2px;"></div>
<div style="left:1495px;top:594.6px;width:14.4px;height:14.4px;background:#2eb5a5;border-radius:8px;"></div>
<div style="left:1532.00px;top:588.24px;font-family:'Liberation Sans', sans-serif;font-size:25.36px;line-height:1;font-weight:700;color:#000;white-space:pre;transform:scaleX(1.0172);transform-origin:0 0;-webkit-text-stroke:0.45px currentColor;">ROIC</div>
<div style="left:11px;top:1670px;width:2880px;height:48px;background:#0a0a0a;"></div>
<div style="left:11px;top:1670px;width:2849px;height:1px;background:#3a3a3a;"></div>
<svg style="position:absolute;left:40px;top:1683px;" width="20" height="20" viewBox="0 0 20 20"><path d="M13 3 L6 10 L13 17" fill="none" stroke="#9a9a9a" stroke-width="1.5"/></svg>
<svg style="position:absolute;left:89px;top:1683px;" width="20" height="20" viewBox="0 0 20 20"><path d="M7 3 L14 10 L7 17" fill="none" stroke="#e0e0e0" stroke-width="1.5"/></svg>
<div style="left:189.50px;top:1685.41px;font-family:'Liberation Sans', sans-serif;font-size:21.16px;line-height:1;font-weight:400;color:#ffffff;white-space:pre;transform:scaleX(0.9867);transform-origin:0 0;">Contents</div>
<div style="left:299px;top:1676px;width:127.60000000000002px;height:35.5px;background:#ffec6e;border-radius:6px;"></div>
<div style="left:313.00px;top:1685.41px;font-family:'Liberation Sans', sans-serif;font-size:21.16px;line-height:1;font-weight:400;color:#161616;white-space:pre;transform:scaleX(0.9716);transform-origin:0 0;">Dashboard</div>
<div style="left:440px;top:1676px;width:105.5px;height:35.5px;background:#ffec6e;border-radius:6px;"></div>
<div style="left:454.50px;top:1685.41px;font-family:'Liberation Sans', sans-serif;font-size:21.16px;line-height:1;font-weight:400;color:#161616;white-space:pre;transform:scaleX(0.9217);transform-origin:0 0;">Revenue</div>
<div style="left:559px;top:1676px;width:157.60000000000002px;height:35.5px;background:#ffec6e;border-radius:6px;"></div>
<div style="left:572.00px;top:1685.41px;font-family:'Liberation Sans', sans-serif;font-size:21.16px;line-height:1;font-weight:400;color:#161616;white-space:pre;transform:scaleX(0.9022);transform-origin:0 0;">COGS &amp; OPEX</div>
<div style="left:730px;top:1676px;width:88.79999999999995px;height:35.5px;background:#ffec6e;border-radius:6px;"></div>
<div style="left:744.00px;top:1685.41px;font-family:'Liberation Sans', sans-serif;font-size:21.16px;line-height:1;font-weight:400;color:#161616;white-space:pre;transform:scaleX(0.9362);transform-origin:0 0;">Payroll</div>
<div style="left:832px;top:1676px;width:86.79999999999995px;height:35.5px;background:#ffec6e;border-radius:6px;"></div>
<div style="left:845.00px;top:1685.41px;font-family:'Liberation Sans', sans-serif;font-size:21.16px;line-height:1;font-weight:400;color:#161616;white-space:pre;transform:scaleX(0.8511);transform-origin:0 0;">CAPEX</div>
<div style="left:932.5px;top:1676px;width:112.29999999999995px;height:35.5px;background:#ffec6e;border-radius:6px;"></div>
<div style="left:945.00px;top:1685.41px;font-family:'Liberation Sans', sans-serif;font-size:21.16px;line-height:1;font-weight:400;color:#161616;white-space:pre;transform:scaleX(0.9627);transform-origin:0 0;">CapTable</div>
<div style="left:1057.8px;top:1676px;width:89.90000000000009px;height:35.5px;background:#ffec6e;border-radius:6px;"></div>
<div style="left:1071.00px;top:1685.41px;font-family:'Liberation Sans', sans-serif;font-size:21.16px;line-height:1;font-weight:400;color:#161616;white-space:pre;transform:scaleX(0.9725);transform-origin:0 0;">Capital</div>
<div style="left:1160.7px;top:1676px;width:42.299999999999955px;height:35.5px;background:#4bb3e6;border-radius:6px;"></div>
<div style="left:1174.50px;top:1685.41px;font-family:'Liberation Sans', sans-serif;font-size:21.16px;line-height:1;font-weight:400;color:#102033;white-space:pre;transform:scaleX(0.7756);transform-origin:0 0;">IS</div>
<div style="left:1216px;top:1676px;width:47.59999999999991px;height:35.5px;background:#4bb3e6;border-radius:6px;"></div>
<div style="left:1229.00px;top:1685.41px;font-family:'Liberation Sans', sans-serif;font-size:21.16px;line-height:1;font-weight:400;color:#102033;white-space:pre;transform:scaleX(0.7805);transform-origin:0 0;">CF</div>
<div style="left:1277px;top:1676px;width:47.700000000000045px;height:35.5px;background:#4bb3e6;border-radius:6px;"></div>
<div style="left:1290.00px;top:1685.41px;font-family:'Liberation Sans', sans-serif;font-size:21.16px;line-height:1;font-weight:400;color:#102033;white-space:pre;transform:scaleX(0.7801);transform-origin:0 0;">BS</div>
<div style="left:1337.7px;top:1676px;width:115.29999999999995px;height:35.5px;background:#4bb3e6;border-radius:6px;"></div>
<div style="left:1351.00px;top:1685.41px;font-family:'Liberation Sans', sans-serif;font-size:21.16px;line-height:1;font-weight:400;color:#102033;white-space:pre;transform:scaleX(0.9413);transform-origin:0 0;">Scenarios</div>
<div style="left:1466px;top:1676px;width:114.5px;height:35.5px;background:#4bb3e6;border-radius:6px;"></div>
<div style="left:1480.00px;top:1685.41px;font-family:'Liberation Sans', sans-serif;font-size:21.16px;line-height:1;font-weight:400;color:#102033;white-space:pre;transform:scaleX(1.0047);transform-origin:0 0;">Valuation</div>
<div style="left:1594px;top:1676px;width:113.79999999999995px;height:35.5px;background:#4bb3e6;border-radius:6px;"></div>
<div style="left:1608.00px;top:1685.41px;font-family:'Liberation Sans', sans-serif;font-size:21.16px;line-height:1;font-weight:400;color:#102033;white-space:pre;transform:scaleX(0.9563);transform-origin:0 0;">Summary</div>
<div style="left:1720.8px;top:1676px;width:48.0px;height:35.5px;background:#4bb3e6;border-radius:6px;"></div>
<div style="left:1734.00px;top:1685.41px;font-family:'Liberation Sans', sans-serif;font-size:21.16px;line-height:1;font-weight:400;color:#102033;white-space:pre;transform:scaleX(0.7623);transform-origin:0 0;">BE</div>
<div style="left:1866.9px;top:1676px;width:84.09999999999991px;height:35.5px;background:#4bb3e6;border-radius:6px;"></div>
<div style="left:1880.50px;top:1685.41px;font-family:'Liberation Sans', sans-serif;font-size:21.16px;line-height:1;font-weight:400;color:#102033;white-space:pre;transform:scaleX(0.9152);transform-origin:0 0;">Charts</div>
<div style="left:1965px;top:1676px;width:63.59999999999991px;height:35.5px;background:#4bb3e6;border-radius:6px;"></div>
<div style="left:1978.50px;top:1685.41px;font-family:'Liberation Sans', sans-serif;font-size:21.16px;line-height:1;font-weight:400;color:#102033;white-space:pre;transform:scaleX(0.8286);transform-origin:0 0;">KPIs</div>
<div style="left:292px;top:1681px;width:1.3px;height:26px;background:#4a4a4a;"></div>
<div style="left:433.4px;top:1681px;width:1.3px;height:26px;background:#4a4a4a;"></div>
<div style="left:552px;top:1681px;width:1.3px;height:26px;background:#4a4a4a;"></div>
<div style="left:723px;top:1681px;width:1.3px;height:26px;background:#4a4a4a;"></div>
<div style="left:825px;top:1681px;width:1.3px;height:26px;background:#4a4a4a;"></div>
<div style="left:925px;top:1681px;width:1.3px;height:26px;background:#4a4a4a;"></div>
<div style="left:1051.5px;top:1681px;width:1.3px;height:26px;background:#4a4a4a;"></div>
<div style="left:1154.5px;top:1681px;width:1.3px;height:26px;background:#4a4a4a;"></div>
<div style="left:1210px;top:1681px;width:1.3px;height:26px;background:#4a4a4a;"></div>
<div style="left:1270px;top:1681px;width:1.3px;height:26px;background:#4a4a4a;"></div>
<div style="left:1331px;top:1681px;width:1.3px;height:26px;background:#4a4a4a;"></div>
<div style="left:1459.5px;top:1681px;width:1.3px;height:26px;background:#4a4a4a;"></div>
<div style="left:1587.7px;top:1681px;width:1.3px;height:26px;background:#4a4a4a;"></div>
<div style="left:1714.6px;top:1681px;width:1.3px;height:26px;background:#4a4a4a;"></div>
<div style="left:1775.6px;top:1681px;width:1.3px;height:26px;background:#4a4a4a;"></div>
<div style="left:1860px;top:1681px;width:1.3px;height:26px;background:#4a4a4a;"></div>
<div style="left:1958px;top:1681px;width:1.3px;height:26px;background:#4a4a4a;"></div>
<div style="left:2035.7px;top:1681px;width:1.3px;height:26px;background:#4a4a4a;"></div>
<div style="left:2042px;top:1676px;width:30px;height:35.5px;overflow:hidden"><div style="position:absolute;left:0;top:0;width:60px;height:35.5px;background:#4bb3e6;border-radius:6px"></div></div>
<div style="left:2055.00px;top:1685.41px;font-family:'Liberation Sans', sans-serif;font-size:21.16px;line-height:1;font-weight:400;color:#102033;white-space:pre;transform:scaleX(0.8309);transform-origin:0 0;">Sc</div>
<div style="left:2072px;top:1674px;width:13px;height:40px;background:#0a0a0a;"></div>
<div style="left:1781.8px;top:1670px;width:72.2px;height:42px;border-radius:0 0 6px 6px;background:linear-gradient(#ffffff 35%,#d8ecf8)"></div>
<svg style="position:absolute;left:1772px;top:1670px;" width="10" height="10" viewBox="0 0 10 10"><path d="M0 0 L10 0 L10 10 Q10 0 0 0 Z" fill="#ffffff"/></svg>
<svg style="position:absolute;left:1854px;top:1670px;" width="10" height="10" viewBox="0 0 10 10"><path d="M0 0 L10 0 Q0 0 0 10 Z" fill="#ffffff"/></svg>
<div style="left:1794.50px;top:1679.48px;font-family:'Liberation Sans', sans-serif;font-size:22.61px;line-height:1;font-weight:400;color:#1a1a1a;white-space:pre;transform:scaleX(0.8409);transform-origin:0 0;">ROIC</div>
<div style="left:1794px;top:1705px;width:48px;height:3px;background:#1e7a46;border-radius:1px;"></div>
<div style="left:2087px;top:1690.5px;width:4.6px;height:4.6px;background:#e6e6e6;border-radius:2.3px;"></div>
<div style="left:2093px;top:1690.5px;width:4.6px;height:4.6px;background:#e6e6e6;border-radius:2.3px;"></div>
<div style="left:2099px;top:1690.5px;width:4.6px;height:4.6px;background:#e6e6e6;border-radius:2.3px;"></div>
<div style="left:2135px;top:1692px;width:16.5px;height:1.7px;background:#e6e6e6;"></div>
<div style="left:2142.4px;top:1684.5px;width:1.7px;height:16.5px;background:#e6e6e6;"></div>
<div style="left:2190.3px;top:1686.5px;width:3px;height:3px;background:#e6e6e6;border-radius:0.5px;"></div>
<div style="left:2190.3px;top:1692.9px;width:3px;height:3px;background:#e6e6e6;border-radius:0.5px;"></div>
<div style="left:2190.3px;top:1699.3px;width:3px;height:3px;background:#e6e6e6;border-radius:0.5px;"></div>
<div style="left:2216px;top:1681px;width:644px;height:24px;background:#141414;border-radius:12px;"></div>
<svg style="position:absolute;left:2220px;top:1684px;" width="20" height="18" viewBox="0 0 20 18"><path d="M14 3.5 L14 14.5 L5.5 9 Z" fill="#9c9c9c" stroke="#9c9c9c" stroke-width="1.5" stroke-linejoin="round"/></svg>
<div style="left:2242px;top:1687px;width:552px;height:12px;background:#9c9c9c;border-radius:6px;"></div>
<svg style="position:absolute;left:2836px;top:1684px;" width="20" height="18" viewBox="0 0 20 18"><path d="M6 3.5 L6 14.5 L14.5 9 Z" fill="#9c9c9c" stroke="#9c9c9c" stroke-width="1.5" stroke-linejoin="round"/></svg>
<div style="left:11px;top:1717px;width:2880px;height:1px;background:#2a2a2a;"></div>
<div style="left:11px;top:1718px;width:2880px;height:33px;background:#151515;"></div>
<div style="left:27.30px;top:1726.52px;font-family:'Liberation Sans', sans-serif;font-size:17.97px;line-height:1;font-weight:400;color:#e6e6e6;white-space:pre;transform:scaleX(0.8123);transform-origin:0 0;">Ready</div>
<svg style="position:absolute;left:98px;top:1725px;" width="26" height="22" viewBox="0 0 26 22">
<rect x="1.5" y="1.5" width="20" height="17" fill="none" stroke="#e6e6e6" stroke-width="1.4"/>
<path d="M1.5 5.5 L21.5 5.5 M4 9 L9 9 M4 12 L9 12 M4 15 L9 15" stroke="#e6e6e6" stroke-width="1.4"/>
<circle cx="17" cy="14.5" r="5.5" fill="#151515" stroke="#e6e6e6" stroke-width="1.4"/><circle cx="17" cy="14.5" r="2.3" fill="#e6e6e6"/>
</svg>
<svg style="position:absolute;left:144px;top:1722px;" width="26" height="26" viewBox="0 0 26 26">
<circle cx="12" cy="4" r="2.6" fill="none" stroke="#e6e6e6" stroke-width="1.5"/>
<path d="M3 7 Q6 10 9.5 10 L14.5 10 Q18 10 21 7" fill="none" stroke="#e6e6e6" stroke-width="1.5" stroke-linecap="round"/>
<path d="M9.5 10 L9.5 15 L6.5 22 M14.5 10 L14.5 14" fill="none" stroke="#e6e6e6" stroke-width="1.5" stroke-linecap="round"/>
<path d="M13 17 L21 25 M21 17 L13 25" stroke="#e6e6e6" stroke-width="1.5"/>
</svg>
<div style="left:173.50px;top:1726.52px;font-family:'Liberation Sans', sans-serif;font-size:17.97px;line-height:1;font-weight:700;color:#e6e6e6;white-space:pre;transform:scaleX(0.8732);transform-origin:0 0;">Accessibility: Investigate</div>
<div style="left:2445px;top:1718px;width:60px;height:33px;background:#262626;"></div>
<svg style="position:absolute;left:2463px;top:1724px;" width="22" height="21" viewBox="0 0 22 21"><rect x="1" y="1" width="19.5" height="19.5" fill="none" stroke="#fff" stroke-width="1.6"/><path d="M7.5 1 L7.5 20.5 M14 1 L14 20.5 M1 7.5 L20.5 7.5 M1 14 L20.5 14" stroke="#fff" stroke-width="1.6"/></svg>
<svg style="position:absolute;left:2523px;top:1724px;" width="24" height="21" viewBox="0 0 24 21"><rect x="1" y="1" width="21" height="19.5" fill="none" stroke="#fff" stroke-width="1.6"/><rect x="5" y="4" width="13" height="13.5" fill="none" stroke="#fff" stroke-width="1.5"/><path d="M8 8 L15 8 M8 11 L15 11 M8 14 L15 14" stroke="#fff" stroke-width="1.3"/></svg>
<svg style="position:absolute;left:2583px;top:1724px;" width="24" height="21" viewBox="0 0 24 21"><rect x="1" y="1" width="21" height="19.5" fill="none" stroke="#fff" stroke-width="1.6"/><path d="M1 12 L12 12 L12 1 M6.5 1 L6.5 12" fill="none" stroke="#fff" stroke-width="1.5"/></svg>
<div style="left:2633px;top:1734px;width:12px;height:1.5px;background:#e6e6e6;"></div>
<div style="left:2653px;top:1734.5px;width:148px;height:1.6px;background:#9a9a9a;"></div>
<div style="left:2726.5px;top:1726px;width:9.5px;height:18.5px;background:#a6a6a6;border-radius:1.5px;"></div>
<div style="left:2808.8px;top:1734px;width:12px;height:1.5px;background:#e6e6e6;"></div>
<div style="left:2814px;top:1728.5px;width:1.5px;height:12px;background:#e6e6e6;"></div>
<div style="left:2839.30px;top:1726.82px;font-family:'Liberation Sans', sans-serif;font-size:17.39px;line-height:1;font-weight:400;color:#e6e6e6;white-space:pre;transform:scaleX(0.9043);transform-origin:0 0;">120%</div>
</body></html>
